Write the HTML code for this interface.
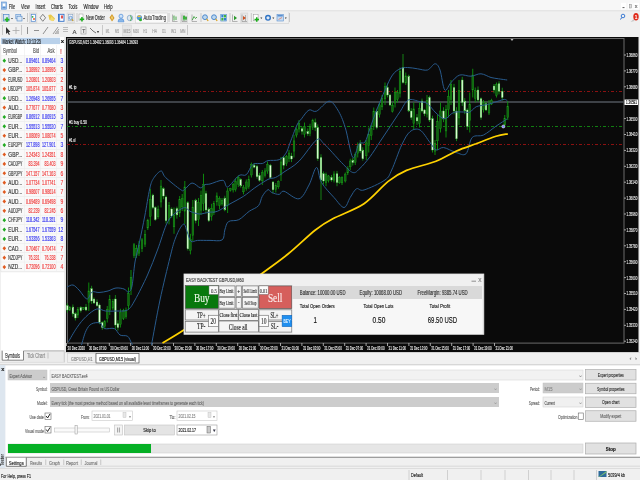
<!DOCTYPE html>
<html><head><meta charset="utf-8"><style>
html,body{margin:0;padding:0;width:640px;height:480px;overflow:hidden;background:#f0f0f0;}
svg{display:block;font-family:"Liberation Sans",sans-serif;will-change:transform;}
</style></head><body>
<svg width="640" height="480" viewBox="0 0 640 480" shape-rendering="auto">
<rect x="0.00" y="0.00" width="640.00" height="480.00" fill="#f0f0f0" />
<rect x="0.00" y="0.00" width="640.00" height="10.50" fill="#f7f7f7" />
<line x1="0.00" y1="10.80" x2="640.00" y2="10.80" stroke="#dcdcdc" stroke-width="0.9" />
<rect x="1.50" y="2.00" width="5.00" height="7.20" fill="#9cc0e8" stroke="#5a8fd0" stroke-width="0.6" />
<rect x="2.80" y="3.50" width="2.50" height="2.50" fill="#ffffff" />
<rect x="2.50" y="7.00" width="3.00" height="1.20" fill="#5a8fd0" />
<text x="9" y="8.6" font-size="7" fill="#1e1e1e" text-anchor="start" font-weight="normal" style="font-family:&quot;Liberation Sans&quot;" textLength="6" lengthAdjust="spacingAndGlyphs"  stroke="#1e1e1e" stroke-width="0.15">File</text>
<text x="21" y="8.6" font-size="7" fill="#1e1e1e" text-anchor="start" font-weight="normal" style="font-family:&quot;Liberation Sans&quot;" textLength="8.6" lengthAdjust="spacingAndGlyphs"  stroke="#1e1e1e" stroke-width="0.15">View</text>
<text x="35.6" y="8.6" font-size="7" fill="#1e1e1e" text-anchor="start" font-weight="normal" style="font-family:&quot;Liberation Sans&quot;" textLength="9.8" lengthAdjust="spacingAndGlyphs"  stroke="#1e1e1e" stroke-width="0.15">Insert</text>
<text x="51" y="8.6" font-size="7" fill="#1e1e1e" text-anchor="start" font-weight="normal" style="font-family:&quot;Liberation Sans&quot;" textLength="11.8" lengthAdjust="spacingAndGlyphs"  stroke="#1e1e1e" stroke-width="0.15">Charts</text>
<text x="68.5" y="8.6" font-size="7" fill="#1e1e1e" text-anchor="start" font-weight="normal" style="font-family:&quot;Liberation Sans&quot;" textLength="8.8" lengthAdjust="spacingAndGlyphs"  stroke="#1e1e1e" stroke-width="0.15">Tools</text>
<text x="83.5" y="8.6" font-size="7" fill="#1e1e1e" text-anchor="start" font-weight="normal" style="font-family:&quot;Liberation Sans&quot;" textLength="15" lengthAdjust="spacingAndGlyphs"  stroke="#1e1e1e" stroke-width="0.15">Window</text>
<text x="104" y="8.6" font-size="7" fill="#1e1e1e" text-anchor="start" font-weight="normal" style="font-family:&quot;Liberation Sans&quot;" textLength="8.6" lengthAdjust="spacingAndGlyphs"  stroke="#1e1e1e" stroke-width="0.15">Help</text>
<rect x="621.00" y="2.80" width="5.00" height="6.60" fill="#ffffff" />
<rect x="628.00" y="2.80" width="4.50" height="6.60" fill="#ffffff" />
<rect x="633.50" y="2.80" width="5.50" height="6.60" fill="#ffffff" />
<line x1="622.50" y1="7.60" x2="624.50" y2="7.60" stroke="#333" stroke-width="0.8" />
<rect x="629.30" y="4.20" width="2.00" height="3.80" fill="#ddd" stroke="#888" stroke-width="0.5" />
<text x="636.2" y="8.3" font-size="5.5" fill="#555" text-anchor="middle" font-weight="normal" style="font-family:&quot;Liberation Sans&quot;"  stroke="#555" stroke-width="0.15">x</text>
<rect x="0.00" y="12.00" width="290.00" height="11.00" fill="#f0f0f0" />
<line x1="0.00" y1="23.50" x2="289.00" y2="23.50" stroke="#dcdcdc" stroke-width="1" />
<line x1="288.70" y1="12.00" x2="288.70" y2="23.50" stroke="#dcdcdc" stroke-width="0.8" />
<line x1="2.00" y1="13.00" x2="2.00" y2="22.00" stroke="#c8c8c8" stroke-width="1" />
<rect x="3.50" y="14.50" width="5.50" height="6.50" fill="#dbe8f6" stroke="#4f86c6" stroke-width="0.7" />
<path d="M6.2,17.2 h1.6 v1.6 h1.6 v1.6 h-1.6 v1.6 h-1.6 v-1.6 h-1.6 v-1.6 h1.6 Z" fill="#22b422"/>
<path d="M11,18 L13,18 L12,19.3 Z" fill="#333"/>
<rect x="15.80" y="14.30" width="5.00" height="4.50" fill="#cfe0f3" stroke="#5a8fcf" stroke-width="0.6" />
<rect x="17.00" y="16.20" width="5.00" height="4.80" fill="#dbe8f6" stroke="#4f86c6" stroke-width="0.6" />
<path d="M23,18 L25,18 L24,19.3 Z" fill="#333"/>
<line x1="27.50" y1="13.00" x2="27.50" y2="22.00" stroke="#c8c8c8" stroke-width="1" />
<rect x="29.40" y="13.00" width="7.50" height="10.00" fill="#e6e6e6" stroke="#d4d4d4" stroke-width="0.6" />
<rect x="31.20" y="14.30" width="4.20" height="7.00" fill="#ffffff" stroke="#4a84d0" stroke-width="0.7" />
<circle cx="32.6" cy="16.8" r="0.9" fill="#2fa82f"/><circle cx="34" cy="19" r="1" fill="#e8602c"/>
<path d="M42.8,14.3 L45.6,17.8 L42.8,21.3 L40,17.8 Z" fill="none" stroke="#777" stroke-width="0.9"/>
<path d="M48.3,15 L51,14.5 L55,18.5 L53.5,21 L49.5,20 Z" fill="#e8c848"/><path d="M51.5,16.5 L54.5,19.5 L52.5,21.3 L50,19.5Z" fill="#f4dc70"/>
<rect x="58.50" y="14.30" width="5.50" height="7.00" fill="#ffffff" stroke="#2f6fc8" stroke-width="0.9" />
<line x1="59.60" y1="14.80" x2="59.60" y2="20.80" stroke="#2f6fc8" stroke-width="0.8" />
<rect x="61.00" y="15.50" width="2.00" height="3.00" fill="#e05050" />
<rect x="67.00" y="13.00" width="7.40" height="10.00" fill="#e6e6e6" stroke="#d4d4d4" stroke-width="0.6" />
<rect x="68.30" y="14.30" width="4.50" height="6.30" fill="#f0f4fa" stroke="#8aa4c4" stroke-width="0.6" />
<circle cx="70.6" cy="17.9" r="1.6" fill="#cfe3f5" stroke="#3a7bc8" stroke-width="0.6"/>
<line x1="71.80" y1="19.20" x2="73.20" y2="20.80" stroke="#c89a20" stroke-width="1.1" />
<line x1="77.00" y1="13.00" x2="77.00" y2="22.00" stroke="#c8c8c8" stroke-width="1" />
<rect x="79.00" y="14.00" width="4.00" height="6.50" fill="#fff" stroke="#999" stroke-width="0.5" />
<path d="M81.2,17 h1.5 v1.5 h1.5 v1.5 h-1.5 v1.5 h-1.5 v-1.5 h-1.5 v-1.5 h1.5 Z" fill="#18b018"/>
<text x="86" y="20" font-size="6.8" fill="#222" text-anchor="start" font-weight="normal" style="font-family:&quot;Liberation Sans&quot;" textLength="18.8" lengthAdjust="spacingAndGlyphs"  stroke="#222" stroke-width="0.15">New Order</text>
<path d="M109.5,17.5 L112,14 L114.5,18 L112,21.5 Z" fill="#d49a2a"/><path d="M111,17.5 L112,15.5 L113.2,18 L112,20 Z" fill="#f0d070"/>
<circle cx="121" cy="16.2" r="2" fill="#cfe3f7" stroke="#4a8ad8" stroke-width="0.7"/><path d="M118,21.8 Q118,18.6 121,18.6 Q124,18.6 124,21.8 Z" fill="#8ab8e8" stroke="#4a8ad8" stroke-width="0.6"/>
<circle cx="130" cy="18" r="2.8" fill="#dfe8f0" stroke="#7aa0c8" stroke-width="0.7"/><path d="M130.5,15.5 Q132.5,18 130.5,20.8" fill="none" stroke="#3aa03a" stroke-width="0.9"/>
<rect x="135.40" y="13.00" width="32.00" height="10.00" fill="#fafafa" stroke="#d0d0d0" stroke-width="0.6" />
<circle cx="139.4" cy="17.6" r="2.7" fill="#5a9ad8"/><path d="M137,17 L139,15 L141.5,17Z" fill="#f0c040"/>
<circle cx="140.5" cy="19.8" r="1.5" fill="#2fb02f"/>
<text x="143.5" y="20" font-size="6.8" fill="#333" text-anchor="start" font-weight="normal" style="font-family:&quot;Liberation Sans&quot;" textLength="22.5" lengthAdjust="spacingAndGlyphs"  stroke="#333" stroke-width="0.15">AutoTrading</text>
<line x1="169.00" y1="13.00" x2="169.00" y2="22.00" stroke="#c8c8c8" stroke-width="1" />
<line x1="172.50" y1="14.50" x2="172.50" y2="21.50" stroke="#888" stroke-width="0.6" />
<line x1="172.50" y1="21.50" x2="177.50" y2="21.50" stroke="#888" stroke-width="0.6" />
<line x1="174.00" y1="15.50" x2="174.00" y2="20.50" stroke="#2a9a2a" stroke-width="0.8" />
<line x1="176.00" y1="16.50" x2="176.00" y2="20.00" stroke="#2a9a2a" stroke-width="0.8" />
<line x1="173.50" y1="17.00" x2="174.00" y2="17.00" stroke="#2a9a2a" stroke-width="0.6" />
<rect x="180.60" y="13.00" width="7.00" height="10.00" fill="#e6e6e6" stroke="#d4d4d4" stroke-width="0.6" />
<line x1="182.00" y1="14.50" x2="182.00" y2="21.50" stroke="#888" stroke-width="0.6" />
<line x1="182.00" y1="21.50" x2="187.00" y2="21.50" stroke="#888" stroke-width="0.6" />
<line x1="184.00" y1="15.00" x2="184.00" y2="21.00" stroke="#157a15" stroke-width="0.6" />
<rect x="183.20" y="16.00" width="1.60" height="3.50" fill="#20b020" />
<line x1="186.00" y1="16.00" x2="186.00" y2="20.50" stroke="#157a15" stroke-width="0.6" />
<rect x="185.30" y="17.00" width="1.40" height="2.50" fill="#20a020" />
<line x1="192.00" y1="14.50" x2="192.00" y2="21.50" stroke="#888" stroke-width="0.6" />
<line x1="192.00" y1="21.50" x2="197.00" y2="21.50" stroke="#888" stroke-width="0.6" />
<path d="M192.3,20 L194,16.5 L195.5,18.5 L197,17" fill="none" stroke="#2a9a2a" stroke-width="0.8"/>
<line x1="201.00" y1="13.00" x2="201.00" y2="22.00" stroke="#c8c8c8" stroke-width="1" />
<circle cx="205" cy="17.2" r="2.4" fill="#bcd8f0" stroke="#3f7fc8" stroke-width="0.9"/>
<line x1="206.60" y1="18.90" x2="208.20" y2="21.00" stroke="#d8a020" stroke-width="1.2" />
<circle cx="214" cy="17.2" r="2.4" fill="#bcd8f0" stroke="#3f7fc8" stroke-width="0.9"/>
<line x1="215.60" y1="18.90" x2="217.20" y2="21.00" stroke="#d8a020" stroke-width="1.2" />
<rect x="220.80" y="14.50" width="5.50" height="6.50" fill="#ffffff" stroke="#3c80c8" stroke-width="0.6" />
<rect x="221.30" y="15.00" width="2.20" height="2.50" fill="#2f7fd0" />
<rect x="223.80" y="15.00" width="2.20" height="2.50" fill="#40b040" />
<rect x="221.30" y="18.00" width="2.20" height="2.50" fill="#40b040" />
<rect x="223.80" y="18.00" width="2.20" height="2.50" fill="#2f7fd0" />
<line x1="230.00" y1="13.00" x2="230.00" y2="22.00" stroke="#c8c8c8" stroke-width="1" />
<line x1="232.50" y1="14.50" x2="232.50" y2="21.50" stroke="#888" stroke-width="0.6" />
<line x1="232.50" y1="21.50" x2="237.50" y2="21.50" stroke="#888" stroke-width="0.6" />
<path d="M234,15.8 L237,18 L234,20.2Z" fill="#2a9a2a"/>
<rect x="240.80" y="13.00" width="7.00" height="10.00" fill="#e6e6e6" stroke="#d4d4d4" stroke-width="0.6" />
<line x1="242.00" y1="14.50" x2="242.00" y2="21.50" stroke="#888" stroke-width="0.6" />
<line x1="242.00" y1="21.50" x2="247.00" y2="21.50" stroke="#888" stroke-width="0.6" />
<line x1="245.50" y1="15.00" x2="245.50" y2="21.00" stroke="#888" stroke-width="0.6" />
<path d="M243,16 L246,18 L243,20Z" fill="#d05020"/>
<line x1="251.30" y1="13.00" x2="251.30" y2="22.00" stroke="#c8c8c8" stroke-width="1" />
<rect x="253.30" y="14.30" width="4.80" height="6.50" fill="#fff" stroke="#999" stroke-width="0.5" />
<path d="M256,17.3 h1.5 v1.5 h1.5 v1.5 h-1.5 v1.5 h-1.5 v-1.5 h-1.5 v-1.5 h1.5 Z" fill="#18b018"/>
<path d="M260.3,17.6 L262.3,17.6 L261.3,18.9 Z" fill="#333"/>
<circle cx="268" cy="17.8" r="3" fill="#2f73c4"/><circle cx="268" cy="17.8" r="1.6" fill="#dfe9f5"/>
<path d="M272.3,17.6 L274.3,17.6 L273.3,18.9 Z" fill="#333"/>
<rect x="277.00" y="14.50" width="6.30" height="6.50" fill="#c6dcf2" stroke="#5a8fcf" stroke-width="0.6" />
<rect x="277.50" y="15.00" width="5.30" height="1.50" fill="#5a8fcf" />
<line x1="278.50" y1="19.50" x2="282.00" y2="17.50" stroke="#e06040" stroke-width="0.6" />
<path d="M284.8,17.6 L286.8,17.6 L285.8,18.9 Z" fill="#333"/>
<line x1="289.50" y1="13.00" x2="289.50" y2="22.00" stroke="#c8c8c8" stroke-width="1" />
<circle cx="623" cy="16" r="1.8" fill="none" stroke="#2a6fd0" stroke-width="0.9"/>
<line x1="621.70" y1="17.50" x2="620.50" y2="19.50" stroke="#2a6fd0" stroke-width="1" />
<path d="M630.6,22 L633.5,19 L634.5,21 Z" fill="#c8c8c8"/>
<ellipse cx="636" cy="16.8" rx="2.7" ry="3.7" fill="#e02a1a"/>
<text x="636" y="18.8" font-size="4.8" fill="#fff" text-anchor="middle" font-weight="normal" style="font-family:&quot;Liberation Sans&quot;"  stroke="#fff" stroke-width="0.15">1</text>
<rect x="0.00" y="24.00" width="188.00" height="12.00" fill="#f0f0f0" />
<line x1="2.50" y1="25.00" x2="2.50" y2="35.00" stroke="#c8c8c8" stroke-width="1" />
<path d="M6,27 L6,34 L7.5,32.5 L9,35 L9.8,34.6 L8.7,32 L10.5,32 Z" fill="#333"/>
<line x1="16.00" y1="27.00" x2="16.00" y2="34.00" stroke="#aaa" stroke-width="0.8" />
<line x1="12.50" y1="30.50" x2="19.50" y2="30.50" stroke="#aaa" stroke-width="0.8" />
<line x1="21.50" y1="25.00" x2="21.50" y2="35.00" stroke="#c8c8c8" stroke-width="1" />
<line x1="27.50" y1="27.00" x2="27.50" y2="34.00" stroke="#777" stroke-width="0.8" />
<line x1="34.00" y1="30.50" x2="39.00" y2="30.50" stroke="#777" stroke-width="0.8" />
<line x1="43.00" y1="34.00" x2="48.00" y2="27.00" stroke="#777" stroke-width="0.8" />
<line x1="53.00" y1="34.00" x2="58.00" y2="27.00" stroke="#888" stroke-width="0.8" />
<line x1="55.00" y1="34.00" x2="59.00" y2="29.00" stroke="#888" stroke-width="0.8" />
<rect x="56.00" y="31.00" width="3.00" height="3.00" fill="#bbb" />
<line x1="63.00" y1="27.50" x2="68.00" y2="27.50" stroke="#999" stroke-width="0.6" />
<line x1="63.00" y1="29.50" x2="68.00" y2="29.50" stroke="#999" stroke-width="0.6" />
<line x1="63.00" y1="31.50" x2="68.00" y2="31.50" stroke="#999" stroke-width="0.6" />
<text x="72.5" y="33.5" font-size="6" fill="#444" text-anchor="start" font-weight="normal" style="font-family:&quot;Liberation Sans&quot;"  stroke="#444" stroke-width="0.15">A</text>
<rect x="81.00" y="27.00" width="5.00" height="7.00" fill="none" stroke="#999" stroke-width="0.6" />
<text x="82.3" y="33" font-size="5" fill="#555" text-anchor="start" font-weight="normal" style="font-family:&quot;Liberation Sans&quot;"  stroke="#555" stroke-width="0.15">T</text>
<path d="M90,28 L93,31 L96,33" fill="none" stroke="#666" stroke-width="0.9"/>
<text x="97" y="33" font-size="4" fill="#333" text-anchor="start" font-weight="normal" style="font-family:&quot;Liberation Sans&quot;"  stroke="#333" stroke-width="0.15">▾</text>
<line x1="102.50" y1="25.00" x2="102.50" y2="35.00" stroke="#c8c8c8" stroke-width="1" />
<rect x="122.30" y="25.00" width="9.00" height="11.00" fill="#e6e6e6" stroke="#d4d4d4" stroke-width="0.6" />
<text x="105.8" y="32.5" font-size="5" fill="#a0a0a0" text-anchor="start" font-weight="normal" style="font-family:&quot;Liberation Sans&quot;" textLength="3.6" lengthAdjust="spacingAndGlyphs"  stroke="#a0a0a0" stroke-width="0.15">M1</text>
<text x="115" y="32.5" font-size="5" fill="#a0a0a0" text-anchor="start" font-weight="normal" style="font-family:&quot;Liberation Sans&quot;" textLength="4" lengthAdjust="spacingAndGlyphs"  stroke="#a0a0a0" stroke-width="0.15">M5</text>
<text x="123.5" y="32.5" font-size="5" fill="#a0a0a0" text-anchor="start" font-weight="normal" style="font-family:&quot;Liberation Sans&quot;" textLength="7" lengthAdjust="spacingAndGlyphs"  stroke="#a0a0a0" stroke-width="0.15">M15</text>
<text x="133" y="32.5" font-size="5" fill="#a0a0a0" text-anchor="start" font-weight="normal" style="font-family:&quot;Liberation Sans&quot;" textLength="6" lengthAdjust="spacingAndGlyphs"  stroke="#a0a0a0" stroke-width="0.15">M30</text>
<text x="143.3" y="32.5" font-size="5" fill="#a0a0a0" text-anchor="start" font-weight="normal" style="font-family:&quot;Liberation Sans&quot;" textLength="3.8" lengthAdjust="spacingAndGlyphs"  stroke="#a0a0a0" stroke-width="0.15">H1</text>
<text x="152.2" y="32.5" font-size="5" fill="#a0a0a0" text-anchor="start" font-weight="normal" style="font-family:&quot;Liberation Sans&quot;" textLength="4.5" lengthAdjust="spacingAndGlyphs"  stroke="#a0a0a0" stroke-width="0.15">H4</text>
<text x="162.2" y="32.5" font-size="5" fill="#a0a0a0" text-anchor="start" font-weight="normal" style="font-family:&quot;Liberation Sans&quot;" textLength="3.5" lengthAdjust="spacingAndGlyphs"  stroke="#a0a0a0" stroke-width="0.15">D1</text>
<text x="171" y="32.5" font-size="5" fill="#a0a0a0" text-anchor="start" font-weight="normal" style="font-family:&quot;Liberation Sans&quot;" textLength="5" lengthAdjust="spacingAndGlyphs"  stroke="#a0a0a0" stroke-width="0.15">W1</text>
<text x="180.2" y="32.5" font-size="5" fill="#a0a0a0" text-anchor="start" font-weight="normal" style="font-family:&quot;Liberation Sans&quot;" textLength="5.2" lengthAdjust="spacingAndGlyphs"  stroke="#a0a0a0" stroke-width="0.15">MN</text>
<line x1="187.50" y1="25.00" x2="187.50" y2="35.00" stroke="#c8c8c8" stroke-width="1" />
<rect x="0.00" y="36.50" width="65.00" height="320.00" fill="#f0f0f0" />
<rect x="0.50" y="37.00" width="64.00" height="8.00" fill="#ffffff" />
<rect x="1.00" y="37.70" width="59.00" height="6.40" fill="#b9d1ea" />
<text x="2.5" y="43.5" font-size="6.3" fill="#1a1a1a" text-anchor="start" font-weight="normal" style="font-family:&quot;Liberation Sans&quot;" textLength="38.5" lengthAdjust="spacingAndGlyphs"  stroke="#1a1a1a" stroke-width="0.15">Market Watch: 10:13:25</text>
<text x="62.4" y="42.9" font-size="6" fill="#111" text-anchor="middle" font-weight="bold" style="font-family:&quot;Liberation Sans&quot;"  stroke="#111" stroke-width="0.15">x</text>
<rect x="1.00" y="45.00" width="63.50" height="305.50" fill="#ffffff" />
<rect x="1.00" y="45.00" width="63.50" height="11.00" fill="#ffffff" />
<text x="3" y="53.2" font-size="6.6" fill="#555" text-anchor="start" font-weight="normal" style="font-family:&quot;Liberation Sans&quot;" textLength="14" lengthAdjust="spacingAndGlyphs"  stroke="#555" stroke-width="0.15">Symbol</text>
<text x="33" y="53.2" font-size="6.6" fill="#555" text-anchor="start" font-weight="normal" style="font-family:&quot;Liberation Sans&quot;" textLength="6" lengthAdjust="spacingAndGlyphs"  stroke="#555" stroke-width="0.15">Bid</text>
<text x="47.5" y="53.2" font-size="6.6" fill="#555" text-anchor="start" font-weight="normal" style="font-family:&quot;Liberation Sans&quot;" textLength="7" lengthAdjust="spacingAndGlyphs"  stroke="#555" stroke-width="0.15">Ask</text>
<text x="61" y="53.5" font-size="6.8" fill="#d04040" text-anchor="middle" font-weight="normal" style="font-family:&quot;Liberation Sans&quot;"  stroke="#d04040" stroke-width="0.15">!</text>
<line x1="1.00" y1="56.00" x2="64.50" y2="56.00" stroke="#e6e6e6" stroke-width="0.8" />
<rect x="1.00" y="56.00" width="63.50" height="9.38" fill="#f9f9f9" />
<line x1="1.00" y1="65.38" x2="64.50" y2="65.38" stroke="#e2e2e2" stroke-width="0.7" />
<path d="M4.3,58.60 L6.1,60.70 L4.3,62.80 L2.5,60.70 Z" fill="#22aa22"/>
<text x="8.3" y="63.0" font-size="6.8" fill="#333" text-anchor="start" font-weight="normal" style="font-family:&quot;Liberation Sans&quot;" textLength="14" lengthAdjust="spacingAndGlyphs" stroke="#333" stroke-width="0.15">USD...</text>
<text x="26.0" y="63.0" font-size="6.8" fill="#3636f0" text-anchor="start" font-weight="normal" style="font-family:&quot;Liberation Sans&quot;" textLength="13.5" lengthAdjust="spacingAndGlyphs" stroke="#3636f0" stroke-width="0.18">0.89461</text>
<text x="42.0" y="63.0" font-size="6.8" fill="#3636f0" text-anchor="start" font-weight="normal" style="font-family:&quot;Liberation Sans&quot;" textLength="13.5" lengthAdjust="spacingAndGlyphs" stroke="#3636f0" stroke-width="0.18">0.89464</text>
<text x="60.5" y="63.0" font-size="6.8" fill="#3636f0" text-anchor="start" font-weight="normal" style="font-family:&quot;Liberation Sans&quot;" textLength="2.8" lengthAdjust="spacingAndGlyphs" stroke="#3636f0" stroke-width="0.15">3</text>
<rect x="1.00" y="65.38" width="63.50" height="9.38" fill="#f9f9f9" />
<line x1="1.00" y1="74.76" x2="64.50" y2="74.76" stroke="#e2e2e2" stroke-width="0.7" />
<path d="M4.3,67.98 L6.1,70.08 L4.3,72.18 L2.5,70.08 Z" fill="#e05a20"/>
<text x="8.3" y="72.38" font-size="6.8" fill="#333" text-anchor="start" font-weight="normal" style="font-family:&quot;Liberation Sans&quot;" textLength="14" lengthAdjust="spacingAndGlyphs" stroke="#333" stroke-width="0.15">GBP...</text>
<text x="26.0" y="72.38" font-size="6.8" fill="#f03838" text-anchor="start" font-weight="normal" style="font-family:&quot;Liberation Sans&quot;" textLength="13.5" lengthAdjust="spacingAndGlyphs" stroke="#f03838" stroke-width="0.18">1.38992</text>
<text x="42.0" y="72.38" font-size="6.8" fill="#f03838" text-anchor="start" font-weight="normal" style="font-family:&quot;Liberation Sans&quot;" textLength="13.5" lengthAdjust="spacingAndGlyphs" stroke="#f03838" stroke-width="0.18">1.38995</text>
<text x="60.5" y="72.38" font-size="6.8" fill="#f03838" text-anchor="start" font-weight="normal" style="font-family:&quot;Liberation Sans&quot;" textLength="2.8" lengthAdjust="spacingAndGlyphs" stroke="#f03838" stroke-width="0.15">3</text>
<rect x="1.00" y="74.76" width="63.50" height="9.38" fill="#f9f9f9" />
<line x1="1.00" y1="84.14" x2="64.50" y2="84.14" stroke="#e2e2e2" stroke-width="0.7" />
<path d="M4.3,77.36 L6.1,79.46 L4.3,81.56 L2.5,79.46 Z" fill="#e05a20"/>
<text x="8.3" y="81.76" font-size="6.8" fill="#333" text-anchor="start" font-weight="normal" style="font-family:&quot;Liberation Sans&quot;" textLength="14" lengthAdjust="spacingAndGlyphs" stroke="#333" stroke-width="0.15">EURUSD</text>
<text x="26.0" y="81.76" font-size="6.8" fill="#f03838" text-anchor="start" font-weight="normal" style="font-family:&quot;Liberation Sans&quot;" textLength="13.5" lengthAdjust="spacingAndGlyphs" stroke="#f03838" stroke-width="0.18">1.20801</text>
<text x="42.0" y="81.76" font-size="6.8" fill="#f03838" text-anchor="start" font-weight="normal" style="font-family:&quot;Liberation Sans&quot;" textLength="13.5" lengthAdjust="spacingAndGlyphs" stroke="#f03838" stroke-width="0.18">1.20803</text>
<text x="60.5" y="81.76" font-size="6.8" fill="#f03838" text-anchor="start" font-weight="normal" style="font-family:&quot;Liberation Sans&quot;" textLength="2.8" lengthAdjust="spacingAndGlyphs" stroke="#f03838" stroke-width="0.15">2</text>
<rect x="1.00" y="84.14" width="63.50" height="9.38" fill="#f9f9f9" />
<line x1="1.00" y1="93.52" x2="64.50" y2="93.52" stroke="#e2e2e2" stroke-width="0.7" />
<path d="M4.3,86.74 L6.1,88.84 L4.3,90.94 L2.5,88.84 Z" fill="#e05a20"/>
<text x="8.3" y="91.14" font-size="6.8" fill="#333" text-anchor="start" font-weight="normal" style="font-family:&quot;Liberation Sans&quot;" textLength="14" lengthAdjust="spacingAndGlyphs" stroke="#333" stroke-width="0.15">USDJPY</text>
<text x="26.0" y="91.14" font-size="6.8" fill="#f03838" text-anchor="start" font-weight="normal" style="font-family:&quot;Liberation Sans&quot;" textLength="13.5" lengthAdjust="spacingAndGlyphs" stroke="#f03838" stroke-width="0.18">105.874</text>
<text x="42.0" y="91.14" font-size="6.8" fill="#f03838" text-anchor="start" font-weight="normal" style="font-family:&quot;Liberation Sans&quot;" textLength="13.5" lengthAdjust="spacingAndGlyphs" stroke="#f03838" stroke-width="0.18">105.877</text>
<text x="60.5" y="91.14" font-size="6.8" fill="#f03838" text-anchor="start" font-weight="normal" style="font-family:&quot;Liberation Sans&quot;" textLength="2.8" lengthAdjust="spacingAndGlyphs" stroke="#f03838" stroke-width="0.15">3</text>
<rect x="1.00" y="93.52" width="63.50" height="9.38" fill="#f9f9f9" />
<line x1="1.00" y1="102.90" x2="64.50" y2="102.90" stroke="#e2e2e2" stroke-width="0.7" />
<path d="M4.3,96.12 L6.1,98.22 L4.3,100.32 L2.5,98.22 Z" fill="#22aa22"/>
<text x="8.3" y="100.52000000000001" font-size="6.8" fill="#333" text-anchor="start" font-weight="normal" style="font-family:&quot;Liberation Sans&quot;" textLength="14" lengthAdjust="spacingAndGlyphs" stroke="#333" stroke-width="0.15">USD...</text>
<text x="26.0" y="100.52000000000001" font-size="6.8" fill="#3636f0" text-anchor="start" font-weight="normal" style="font-family:&quot;Liberation Sans&quot;" textLength="13.5" lengthAdjust="spacingAndGlyphs" stroke="#3636f0" stroke-width="0.18">1.26948</text>
<text x="42.0" y="100.52000000000001" font-size="6.8" fill="#3636f0" text-anchor="start" font-weight="normal" style="font-family:&quot;Liberation Sans&quot;" textLength="13.5" lengthAdjust="spacingAndGlyphs" stroke="#3636f0" stroke-width="0.18">1.26955</text>
<text x="60.5" y="100.52000000000001" font-size="6.8" fill="#3636f0" text-anchor="start" font-weight="normal" style="font-family:&quot;Liberation Sans&quot;" textLength="2.8" lengthAdjust="spacingAndGlyphs" stroke="#3636f0" stroke-width="0.15">7</text>
<rect x="1.00" y="102.90" width="63.50" height="9.38" fill="#f9f9f9" />
<line x1="1.00" y1="112.28" x2="64.50" y2="112.28" stroke="#e2e2e2" stroke-width="0.7" />
<path d="M4.3,105.50 L6.1,107.60 L4.3,109.70 L2.5,107.60 Z" fill="#e05a20"/>
<text x="8.3" y="109.9" font-size="6.8" fill="#333" text-anchor="start" font-weight="normal" style="font-family:&quot;Liberation Sans&quot;" textLength="14" lengthAdjust="spacingAndGlyphs" stroke="#333" stroke-width="0.15">AUD...</text>
<text x="26.0" y="109.9" font-size="6.8" fill="#f03838" text-anchor="start" font-weight="normal" style="font-family:&quot;Liberation Sans&quot;" textLength="13.5" lengthAdjust="spacingAndGlyphs" stroke="#f03838" stroke-width="0.18">0.77677</text>
<text x="42.0" y="109.9" font-size="6.8" fill="#f03838" text-anchor="start" font-weight="normal" style="font-family:&quot;Liberation Sans&quot;" textLength="13.5" lengthAdjust="spacingAndGlyphs" stroke="#f03838" stroke-width="0.18">0.77680</text>
<text x="60.5" y="109.9" font-size="6.8" fill="#f03838" text-anchor="start" font-weight="normal" style="font-family:&quot;Liberation Sans&quot;" textLength="2.8" lengthAdjust="spacingAndGlyphs" stroke="#f03838" stroke-width="0.15">3</text>
<rect x="1.00" y="112.28" width="63.50" height="9.38" fill="#f9f9f9" />
<line x1="1.00" y1="121.66" x2="64.50" y2="121.66" stroke="#e2e2e2" stroke-width="0.7" />
<path d="M4.3,114.88 L6.1,116.98 L4.3,119.08 L2.5,116.98 Z" fill="#22aa22"/>
<text x="8.3" y="119.28" font-size="6.8" fill="#333" text-anchor="start" font-weight="normal" style="font-family:&quot;Liberation Sans&quot;" textLength="14" lengthAdjust="spacingAndGlyphs" stroke="#333" stroke-width="0.15">EURGBP</text>
<text x="26.0" y="119.28" font-size="6.8" fill="#3636f0" text-anchor="start" font-weight="normal" style="font-family:&quot;Liberation Sans&quot;" textLength="13.5" lengthAdjust="spacingAndGlyphs" stroke="#3636f0" stroke-width="0.18">0.86912</text>
<text x="42.0" y="119.28" font-size="6.8" fill="#3636f0" text-anchor="start" font-weight="normal" style="font-family:&quot;Liberation Sans&quot;" textLength="13.5" lengthAdjust="spacingAndGlyphs" stroke="#3636f0" stroke-width="0.18">0.86915</text>
<text x="60.5" y="119.28" font-size="6.8" fill="#3636f0" text-anchor="start" font-weight="normal" style="font-family:&quot;Liberation Sans&quot;" textLength="2.8" lengthAdjust="spacingAndGlyphs" stroke="#3636f0" stroke-width="0.15">3</text>
<rect x="1.00" y="121.66" width="63.50" height="9.38" fill="#f9f9f9" />
<line x1="1.00" y1="131.04" x2="64.50" y2="131.04" stroke="#e2e2e2" stroke-width="0.7" />
<path d="M4.3,124.26 L6.1,126.36 L4.3,128.46 L2.5,126.36 Z" fill="#22aa22"/>
<text x="8.3" y="128.66000000000003" font-size="6.8" fill="#333" text-anchor="start" font-weight="normal" style="font-family:&quot;Liberation Sans&quot;" textLength="14" lengthAdjust="spacingAndGlyphs" stroke="#333" stroke-width="0.15">EUR...</text>
<text x="26.0" y="128.66000000000003" font-size="6.8" fill="#3636f0" text-anchor="start" font-weight="normal" style="font-family:&quot;Liberation Sans&quot;" textLength="13.5" lengthAdjust="spacingAndGlyphs" stroke="#3636f0" stroke-width="0.18">1.55513</text>
<text x="42.0" y="128.66000000000003" font-size="6.8" fill="#3636f0" text-anchor="start" font-weight="normal" style="font-family:&quot;Liberation Sans&quot;" textLength="13.5" lengthAdjust="spacingAndGlyphs" stroke="#3636f0" stroke-width="0.18">1.55520</text>
<text x="60.5" y="128.66000000000003" font-size="6.8" fill="#3636f0" text-anchor="start" font-weight="normal" style="font-family:&quot;Liberation Sans&quot;" textLength="2.8" lengthAdjust="spacingAndGlyphs" stroke="#3636f0" stroke-width="0.15">7</text>
<rect x="1.00" y="131.04" width="63.50" height="9.38" fill="#f9f9f9" />
<line x1="1.00" y1="140.42" x2="64.50" y2="140.42" stroke="#e2e2e2" stroke-width="0.7" />
<path d="M4.3,133.64 L6.1,135.74 L4.3,137.84 L2.5,135.74 Z" fill="#e05a20"/>
<text x="8.3" y="138.04000000000002" font-size="6.8" fill="#333" text-anchor="start" font-weight="normal" style="font-family:&quot;Liberation Sans&quot;" textLength="14" lengthAdjust="spacingAndGlyphs" stroke="#333" stroke-width="0.15">EUR...</text>
<text x="26.0" y="138.04000000000002" font-size="6.8" fill="#f03838" text-anchor="start" font-weight="normal" style="font-family:&quot;Liberation Sans&quot;" textLength="13.5" lengthAdjust="spacingAndGlyphs" stroke="#f03838" stroke-width="0.18">1.08069</text>
<text x="42.0" y="138.04000000000002" font-size="6.8" fill="#f03838" text-anchor="start" font-weight="normal" style="font-family:&quot;Liberation Sans&quot;" textLength="13.5" lengthAdjust="spacingAndGlyphs" stroke="#f03838" stroke-width="0.18">1.08074</text>
<text x="60.5" y="138.04000000000002" font-size="6.8" fill="#f03838" text-anchor="start" font-weight="normal" style="font-family:&quot;Liberation Sans&quot;" textLength="2.8" lengthAdjust="spacingAndGlyphs" stroke="#f03838" stroke-width="0.15">5</text>
<rect x="1.00" y="140.42" width="63.50" height="9.38" fill="#f9f9f9" />
<line x1="1.00" y1="149.80" x2="64.50" y2="149.80" stroke="#e2e2e2" stroke-width="0.7" />
<path d="M4.3,143.02 L6.1,145.12 L4.3,147.22 L2.5,145.12 Z" fill="#22aa22"/>
<text x="8.3" y="147.42000000000002" font-size="6.8" fill="#333" text-anchor="start" font-weight="normal" style="font-family:&quot;Liberation Sans&quot;" textLength="14" lengthAdjust="spacingAndGlyphs" stroke="#333" stroke-width="0.15">EURJPY</text>
<text x="26.0" y="147.42000000000002" font-size="6.8" fill="#3636f0" text-anchor="start" font-weight="normal" style="font-family:&quot;Liberation Sans&quot;" textLength="13.5" lengthAdjust="spacingAndGlyphs" stroke="#3636f0" stroke-width="0.18">127.898</text>
<text x="42.0" y="147.42000000000002" font-size="6.8" fill="#3636f0" text-anchor="start" font-weight="normal" style="font-family:&quot;Liberation Sans&quot;" textLength="13.5" lengthAdjust="spacingAndGlyphs" stroke="#3636f0" stroke-width="0.18">127.901</text>
<text x="60.5" y="147.42000000000002" font-size="6.8" fill="#3636f0" text-anchor="start" font-weight="normal" style="font-family:&quot;Liberation Sans&quot;" textLength="2.8" lengthAdjust="spacingAndGlyphs" stroke="#3636f0" stroke-width="0.15">3</text>
<rect x="1.00" y="149.80" width="63.50" height="9.38" fill="#f9f9f9" />
<line x1="1.00" y1="159.18" x2="64.50" y2="159.18" stroke="#e2e2e2" stroke-width="0.7" />
<path d="M4.3,152.40 L6.1,154.50 L4.3,156.60 L2.5,154.50 Z" fill="#e05a20"/>
<text x="8.3" y="156.8" font-size="6.8" fill="#333" text-anchor="start" font-weight="normal" style="font-family:&quot;Liberation Sans&quot;" textLength="14" lengthAdjust="spacingAndGlyphs" stroke="#333" stroke-width="0.15">GBP...</text>
<text x="26.0" y="156.8" font-size="6.8" fill="#f03838" text-anchor="start" font-weight="normal" style="font-family:&quot;Liberation Sans&quot;" textLength="13.5" lengthAdjust="spacingAndGlyphs" stroke="#f03838" stroke-width="0.18">1.24343</text>
<text x="42.0" y="156.8" font-size="6.8" fill="#f03838" text-anchor="start" font-weight="normal" style="font-family:&quot;Liberation Sans&quot;" textLength="13.5" lengthAdjust="spacingAndGlyphs" stroke="#f03838" stroke-width="0.18">1.24351</text>
<text x="60.5" y="156.8" font-size="6.8" fill="#f03838" text-anchor="start" font-weight="normal" style="font-family:&quot;Liberation Sans&quot;" textLength="2.8" lengthAdjust="spacingAndGlyphs" stroke="#f03838" stroke-width="0.15">8</text>
<rect x="1.00" y="159.18" width="63.50" height="9.38" fill="#f9f9f9" />
<line x1="1.00" y1="168.56" x2="64.50" y2="168.56" stroke="#e2e2e2" stroke-width="0.7" />
<path d="M4.3,161.78 L6.1,163.88 L4.3,165.98 L2.5,163.88 Z" fill="#e05a20"/>
<text x="8.3" y="166.18" font-size="6.8" fill="#333" text-anchor="start" font-weight="normal" style="font-family:&quot;Liberation Sans&quot;" textLength="14" lengthAdjust="spacingAndGlyphs" stroke="#333" stroke-width="0.15">CADJPY</text>
<text x="28.5" y="166.18" font-size="6.8" fill="#f03838" text-anchor="start" font-weight="normal" style="font-family:&quot;Liberation Sans&quot;" textLength="11" lengthAdjust="spacingAndGlyphs" stroke="#f03838" stroke-width="0.18">83.394</text>
<text x="44.5" y="166.18" font-size="6.8" fill="#f03838" text-anchor="start" font-weight="normal" style="font-family:&quot;Liberation Sans&quot;" textLength="11" lengthAdjust="spacingAndGlyphs" stroke="#f03838" stroke-width="0.18">83.403</text>
<text x="60.5" y="166.18" font-size="6.8" fill="#f03838" text-anchor="start" font-weight="normal" style="font-family:&quot;Liberation Sans&quot;" textLength="2.8" lengthAdjust="spacingAndGlyphs" stroke="#f03838" stroke-width="0.15">9</text>
<rect x="1.00" y="168.56" width="63.50" height="9.38" fill="#f9f9f9" />
<line x1="1.00" y1="177.94" x2="64.50" y2="177.94" stroke="#e2e2e2" stroke-width="0.7" />
<path d="M4.3,171.16 L6.1,173.26 L4.3,175.36 L2.5,173.26 Z" fill="#e05a20"/>
<text x="8.3" y="175.56" font-size="6.8" fill="#333" text-anchor="start" font-weight="normal" style="font-family:&quot;Liberation Sans&quot;" textLength="14" lengthAdjust="spacingAndGlyphs" stroke="#333" stroke-width="0.15">GBPJPY</text>
<text x="26.0" y="175.56" font-size="6.8" fill="#f03838" text-anchor="start" font-weight="normal" style="font-family:&quot;Liberation Sans&quot;" textLength="13.5" lengthAdjust="spacingAndGlyphs" stroke="#f03838" stroke-width="0.18">147.157</text>
<text x="42.0" y="175.56" font-size="6.8" fill="#f03838" text-anchor="start" font-weight="normal" style="font-family:&quot;Liberation Sans&quot;" textLength="13.5" lengthAdjust="spacingAndGlyphs" stroke="#f03838" stroke-width="0.18">147.163</text>
<text x="60.5" y="175.56" font-size="6.8" fill="#f03838" text-anchor="start" font-weight="normal" style="font-family:&quot;Liberation Sans&quot;" textLength="2.8" lengthAdjust="spacingAndGlyphs" stroke="#f03838" stroke-width="0.15">6</text>
<rect x="1.00" y="177.94" width="63.50" height="9.38" fill="#f9f9f9" />
<line x1="1.00" y1="187.32" x2="64.50" y2="187.32" stroke="#e2e2e2" stroke-width="0.7" />
<path d="M4.3,180.54 L6.1,182.64 L4.3,184.74 L2.5,182.64 Z" fill="#e05a20"/>
<text x="8.3" y="184.94" font-size="6.8" fill="#333" text-anchor="start" font-weight="normal" style="font-family:&quot;Liberation Sans&quot;" textLength="14" lengthAdjust="spacingAndGlyphs" stroke="#333" stroke-width="0.15">AUD...</text>
<text x="26.0" y="184.94" font-size="6.8" fill="#f03838" text-anchor="start" font-weight="normal" style="font-family:&quot;Liberation Sans&quot;" textLength="13.5" lengthAdjust="spacingAndGlyphs" stroke="#f03838" stroke-width="0.18">1.07734</text>
<text x="42.0" y="184.94" font-size="6.8" fill="#f03838" text-anchor="start" font-weight="normal" style="font-family:&quot;Liberation Sans&quot;" textLength="13.5" lengthAdjust="spacingAndGlyphs" stroke="#f03838" stroke-width="0.18">1.07741</text>
<text x="60.5" y="184.94" font-size="6.8" fill="#f03838" text-anchor="start" font-weight="normal" style="font-family:&quot;Liberation Sans&quot;" textLength="2.8" lengthAdjust="spacingAndGlyphs" stroke="#f03838" stroke-width="0.15">7</text>
<rect x="1.00" y="187.32" width="63.50" height="9.38" fill="#f9f9f9" />
<line x1="1.00" y1="196.70" x2="64.50" y2="196.70" stroke="#e2e2e2" stroke-width="0.7" />
<path d="M4.3,189.92 L6.1,192.02 L4.3,194.12 L2.5,192.02 Z" fill="#e05a20"/>
<text x="8.3" y="194.32000000000002" font-size="6.8" fill="#333" text-anchor="start" font-weight="normal" style="font-family:&quot;Liberation Sans&quot;" textLength="14" lengthAdjust="spacingAndGlyphs" stroke="#333" stroke-width="0.15">AUD...</text>
<text x="26.0" y="194.32000000000002" font-size="6.8" fill="#f03838" text-anchor="start" font-weight="normal" style="font-family:&quot;Liberation Sans&quot;" textLength="13.5" lengthAdjust="spacingAndGlyphs" stroke="#f03838" stroke-width="0.18">0.98607</text>
<text x="42.0" y="194.32000000000002" font-size="6.8" fill="#f03838" text-anchor="start" font-weight="normal" style="font-family:&quot;Liberation Sans&quot;" textLength="13.5" lengthAdjust="spacingAndGlyphs" stroke="#f03838" stroke-width="0.18">0.98614</text>
<text x="60.5" y="194.32000000000002" font-size="6.8" fill="#f03838" text-anchor="start" font-weight="normal" style="font-family:&quot;Liberation Sans&quot;" textLength="2.8" lengthAdjust="spacingAndGlyphs" stroke="#f03838" stroke-width="0.15">7</text>
<rect x="1.00" y="196.70" width="63.50" height="9.38" fill="#f9f9f9" />
<line x1="1.00" y1="206.08" x2="64.50" y2="206.08" stroke="#e2e2e2" stroke-width="0.7" />
<path d="M4.3,199.30 L6.1,201.40 L4.3,203.50 L2.5,201.40 Z" fill="#e05a20"/>
<text x="8.3" y="203.70000000000002" font-size="6.8" fill="#333" text-anchor="start" font-weight="normal" style="font-family:&quot;Liberation Sans&quot;" textLength="14" lengthAdjust="spacingAndGlyphs" stroke="#333" stroke-width="0.15">AUD...</text>
<text x="26.0" y="203.70000000000002" font-size="6.8" fill="#f03838" text-anchor="start" font-weight="normal" style="font-family:&quot;Liberation Sans&quot;" textLength="13.5" lengthAdjust="spacingAndGlyphs" stroke="#f03838" stroke-width="0.18">0.69489</text>
<text x="42.0" y="203.70000000000002" font-size="6.8" fill="#f03838" text-anchor="start" font-weight="normal" style="font-family:&quot;Liberation Sans&quot;" textLength="13.5" lengthAdjust="spacingAndGlyphs" stroke="#f03838" stroke-width="0.18">0.69498</text>
<text x="60.5" y="203.70000000000002" font-size="6.8" fill="#f03838" text-anchor="start" font-weight="normal" style="font-family:&quot;Liberation Sans&quot;" textLength="2.8" lengthAdjust="spacingAndGlyphs" stroke="#f03838" stroke-width="0.15">9</text>
<rect x="1.00" y="206.08" width="63.50" height="9.38" fill="#f9f9f9" />
<line x1="1.00" y1="215.46" x2="64.50" y2="215.46" stroke="#e2e2e2" stroke-width="0.7" />
<path d="M4.3,208.68 L6.1,210.78 L4.3,212.88 L2.5,210.78 Z" fill="#e05a20"/>
<text x="8.3" y="213.08" font-size="6.8" fill="#333" text-anchor="start" font-weight="normal" style="font-family:&quot;Liberation Sans&quot;" textLength="14" lengthAdjust="spacingAndGlyphs" stroke="#333" stroke-width="0.15">AUDJPY</text>
<text x="28.5" y="213.08" font-size="6.8" fill="#f03838" text-anchor="start" font-weight="normal" style="font-family:&quot;Liberation Sans&quot;" textLength="11" lengthAdjust="spacingAndGlyphs" stroke="#f03838" stroke-width="0.18">82.239</text>
<text x="44.5" y="213.08" font-size="6.8" fill="#f03838" text-anchor="start" font-weight="normal" style="font-family:&quot;Liberation Sans&quot;" textLength="11" lengthAdjust="spacingAndGlyphs" stroke="#f03838" stroke-width="0.18">82.245</text>
<text x="60.5" y="213.08" font-size="6.8" fill="#f03838" text-anchor="start" font-weight="normal" style="font-family:&quot;Liberation Sans&quot;" textLength="2.8" lengthAdjust="spacingAndGlyphs" stroke="#f03838" stroke-width="0.15">6</text>
<rect x="1.00" y="215.46" width="63.50" height="9.38" fill="#f9f9f9" />
<line x1="1.00" y1="224.84" x2="64.50" y2="224.84" stroke="#e2e2e2" stroke-width="0.7" />
<path d="M4.3,218.06 L6.1,220.16 L4.3,222.26 L2.5,220.16 Z" fill="#22aa22"/>
<text x="8.3" y="222.46" font-size="6.8" fill="#333" text-anchor="start" font-weight="normal" style="font-family:&quot;Liberation Sans&quot;" textLength="14" lengthAdjust="spacingAndGlyphs" stroke="#333" stroke-width="0.15">CHFJPY</text>
<text x="26.0" y="222.46" font-size="6.8" fill="#3636f0" text-anchor="start" font-weight="normal" style="font-family:&quot;Liberation Sans&quot;" textLength="13.5" lengthAdjust="spacingAndGlyphs" stroke="#3636f0" stroke-width="0.18">118.342</text>
<text x="42.0" y="222.46" font-size="6.8" fill="#3636f0" text-anchor="start" font-weight="normal" style="font-family:&quot;Liberation Sans&quot;" textLength="13.5" lengthAdjust="spacingAndGlyphs" stroke="#3636f0" stroke-width="0.18">118.351</text>
<text x="60.5" y="222.46" font-size="6.8" fill="#3636f0" text-anchor="start" font-weight="normal" style="font-family:&quot;Liberation Sans&quot;" textLength="2.8" lengthAdjust="spacingAndGlyphs" stroke="#3636f0" stroke-width="0.15">9</text>
<rect x="1.00" y="224.84" width="63.50" height="9.38" fill="#f9f9f9" />
<line x1="1.00" y1="234.22" x2="64.50" y2="234.22" stroke="#e2e2e2" stroke-width="0.7" />
<path d="M4.3,227.44 L6.1,229.54 L4.3,231.64 L2.5,229.54 Z" fill="#22aa22"/>
<text x="8.3" y="231.84" font-size="6.8" fill="#333" text-anchor="start" font-weight="normal" style="font-family:&quot;Liberation Sans&quot;" textLength="14" lengthAdjust="spacingAndGlyphs" stroke="#333" stroke-width="0.15">EUR...</text>
<text x="26.0" y="231.84" font-size="6.8" fill="#3636f0" text-anchor="start" font-weight="normal" style="font-family:&quot;Liberation Sans&quot;" textLength="13.5" lengthAdjust="spacingAndGlyphs" stroke="#3636f0" stroke-width="0.18">1.67547</text>
<text x="42.0" y="231.84" font-size="6.8" fill="#3636f0" text-anchor="start" font-weight="normal" style="font-family:&quot;Liberation Sans&quot;" textLength="13.5" lengthAdjust="spacingAndGlyphs" stroke="#3636f0" stroke-width="0.18">1.67559</text>
<text x="58.3" y="231.84" font-size="6.8" fill="#3636f0" text-anchor="start" font-weight="normal" style="font-family:&quot;Liberation Sans&quot;" textLength="5" lengthAdjust="spacingAndGlyphs" stroke="#3636f0" stroke-width="0.15">12</text>
<rect x="1.00" y="234.22" width="63.50" height="9.38" fill="#f9f9f9" />
<line x1="1.00" y1="243.60" x2="64.50" y2="243.60" stroke="#e2e2e2" stroke-width="0.7" />
<path d="M4.3,236.82 L6.1,238.92 L4.3,241.02 L2.5,238.92 Z" fill="#22aa22"/>
<text x="8.3" y="241.22000000000003" font-size="6.8" fill="#333" text-anchor="start" font-weight="normal" style="font-family:&quot;Liberation Sans&quot;" textLength="14" lengthAdjust="spacingAndGlyphs" stroke="#333" stroke-width="0.15">EUR...</text>
<text x="26.0" y="241.22000000000003" font-size="6.8" fill="#3636f0" text-anchor="start" font-weight="normal" style="font-family:&quot;Liberation Sans&quot;" textLength="13.5" lengthAdjust="spacingAndGlyphs" stroke="#3636f0" stroke-width="0.18">1.53356</text>
<text x="42.0" y="241.22000000000003" font-size="6.8" fill="#3636f0" text-anchor="start" font-weight="normal" style="font-family:&quot;Liberation Sans&quot;" textLength="13.5" lengthAdjust="spacingAndGlyphs" stroke="#3636f0" stroke-width="0.18">1.53363</text>
<text x="60.5" y="241.22000000000003" font-size="6.8" fill="#3636f0" text-anchor="start" font-weight="normal" style="font-family:&quot;Liberation Sans&quot;" textLength="2.8" lengthAdjust="spacingAndGlyphs" stroke="#3636f0" stroke-width="0.15">8</text>
<rect x="1.00" y="243.60" width="63.50" height="9.38" fill="#f9f9f9" />
<line x1="1.00" y1="252.98" x2="64.50" y2="252.98" stroke="#e2e2e2" stroke-width="0.7" />
<path d="M4.3,246.20 L6.1,248.30 L4.3,250.40 L2.5,248.30 Z" fill="#e05a20"/>
<text x="8.3" y="250.60000000000002" font-size="6.8" fill="#333" text-anchor="start" font-weight="normal" style="font-family:&quot;Liberation Sans&quot;" textLength="14" lengthAdjust="spacingAndGlyphs" stroke="#333" stroke-width="0.15">CAD...</text>
<text x="26.0" y="250.60000000000002" font-size="6.8" fill="#f03838" text-anchor="start" font-weight="normal" style="font-family:&quot;Liberation Sans&quot;" textLength="13.5" lengthAdjust="spacingAndGlyphs" stroke="#f03838" stroke-width="0.18">0.70467</text>
<text x="42.0" y="250.60000000000002" font-size="6.8" fill="#f03838" text-anchor="start" font-weight="normal" style="font-family:&quot;Liberation Sans&quot;" textLength="13.5" lengthAdjust="spacingAndGlyphs" stroke="#f03838" stroke-width="0.18">0.70474</text>
<text x="60.5" y="250.60000000000002" font-size="6.8" fill="#f03838" text-anchor="start" font-weight="normal" style="font-family:&quot;Liberation Sans&quot;" textLength="2.8" lengthAdjust="spacingAndGlyphs" stroke="#f03838" stroke-width="0.15">7</text>
<rect x="1.00" y="252.98" width="63.50" height="9.38" fill="#f9f9f9" />
<line x1="1.00" y1="262.36" x2="64.50" y2="262.36" stroke="#e2e2e2" stroke-width="0.7" />
<path d="M4.3,255.58 L6.1,257.68 L4.3,259.78 L2.5,257.68 Z" fill="#e05a20"/>
<text x="8.3" y="259.98" font-size="6.8" fill="#333" text-anchor="start" font-weight="normal" style="font-family:&quot;Liberation Sans&quot;" textLength="14" lengthAdjust="spacingAndGlyphs" stroke="#333" stroke-width="0.15">NZDJPY</text>
<text x="28.5" y="259.98" font-size="6.8" fill="#f03838" text-anchor="start" font-weight="normal" style="font-family:&quot;Liberation Sans&quot;" textLength="11" lengthAdjust="spacingAndGlyphs" stroke="#f03838" stroke-width="0.18">76.331</text>
<text x="44.5" y="259.98" font-size="6.8" fill="#f03838" text-anchor="start" font-weight="normal" style="font-family:&quot;Liberation Sans&quot;" textLength="11" lengthAdjust="spacingAndGlyphs" stroke="#f03838" stroke-width="0.18">76.338</text>
<text x="60.5" y="259.98" font-size="6.8" fill="#f03838" text-anchor="start" font-weight="normal" style="font-family:&quot;Liberation Sans&quot;" textLength="2.8" lengthAdjust="spacingAndGlyphs" stroke="#f03838" stroke-width="0.15">7</text>
<rect x="1.00" y="262.36" width="63.50" height="9.38" fill="#f9f9f9" />
<line x1="1.00" y1="271.74" x2="64.50" y2="271.74" stroke="#e2e2e2" stroke-width="0.7" />
<path d="M4.3,264.96 L6.1,267.06 L4.3,269.16 L2.5,267.06 Z" fill="#e05a20"/>
<text x="8.3" y="269.36" font-size="6.8" fill="#333" text-anchor="start" font-weight="normal" style="font-family:&quot;Liberation Sans&quot;" textLength="14" lengthAdjust="spacingAndGlyphs" stroke="#333" stroke-width="0.15">NZD...</text>
<text x="26.0" y="269.36" font-size="6.8" fill="#f03838" text-anchor="start" font-weight="normal" style="font-family:&quot;Liberation Sans&quot;" textLength="13.5" lengthAdjust="spacingAndGlyphs" stroke="#f03838" stroke-width="0.18">0.72096</text>
<text x="42.0" y="269.36" font-size="6.8" fill="#f03838" text-anchor="start" font-weight="normal" style="font-family:&quot;Liberation Sans&quot;" textLength="13.5" lengthAdjust="spacingAndGlyphs" stroke="#f03838" stroke-width="0.18">0.72100</text>
<text x="60.5" y="269.36" font-size="6.8" fill="#f03838" text-anchor="start" font-weight="normal" style="font-family:&quot;Liberation Sans&quot;" textLength="2.8" lengthAdjust="spacingAndGlyphs" stroke="#f03838" stroke-width="0.15">4</text>
<line x1="24.50" y1="45.00" x2="24.50" y2="271.74" stroke="#ececec" stroke-width="0.6" />
<line x1="40.50" y1="45.00" x2="40.50" y2="271.74" stroke="#ececec" stroke-width="0.6" />
<line x1="56.50" y1="45.00" x2="56.50" y2="271.74" stroke="#ececec" stroke-width="0.6" />
<line x1="0.80" y1="45.00" x2="0.80" y2="271.74" stroke="#e0e0e0" stroke-width="0.6" />
<rect x="0.00" y="350.50" width="65.00" height="14.00" fill="#f0f0f0" />
<rect x="24.00" y="351.00" width="40.00" height="11.00" fill="#ebebeb" />
<line x1="23.50" y1="350.90" x2="64.50" y2="350.90" stroke="#a8a8a8" stroke-width="0.9" />
<line x1="64.30" y1="351.00" x2="64.30" y2="362.00" stroke="#bbbbbb" stroke-width="0.7" />
<line x1="0.00" y1="362.40" x2="65.00" y2="362.40" stroke="#d8d8d8" stroke-width="0.7" />
<rect x="2.00" y="350.50" width="21.50" height="9.70" fill="#ffffff" />
<path d="M2.2,350.7 L2.2,360.2 L23.5,360.2 L23.5,350.9" fill="none" stroke="#666" stroke-width="0.8"/>
<text x="5" y="357.8" font-size="6.3" fill="#333" text-anchor="start" font-weight="normal" style="font-family:&quot;Liberation Sans&quot;" textLength="15" lengthAdjust="spacingAndGlyphs"  stroke="#333" stroke-width="0.15">Symbols</text>
<text x="27" y="357.8" font-size="6.3" fill="#8a8a8a" text-anchor="start" font-weight="normal" style="font-family:&quot;Liberation Sans&quot;" textLength="18" lengthAdjust="spacingAndGlyphs"  stroke="#8a8a8a" stroke-width="0.15">Tick Chart</text>
<line x1="48.00" y1="352.50" x2="48.00" y2="358.50" stroke="#aaa" stroke-width="0.6" />
<line x1="65.00" y1="37.00" x2="65.00" y2="352.00" stroke="#d8d8d8" stroke-width="0.8" />
<rect x="66.00" y="37.00" width="572.50" height="315.50" fill="#0a0a0a" />
<rect x="67.4" y="38.5" width="556.6" height="304.6" fill="none" stroke="#6a6a6a" stroke-width="1"/>
<text x="69" y="43.8" font-size="5.3" fill="#e8e8e8" text-anchor="start" font-weight="normal" style="font-family:&quot;Liberation Sans&quot;" textLength="69" lengthAdjust="spacingAndGlyphs"  stroke="#e8e8e8" stroke-width="0.15">GBPUSD,M15  1.36492 1.36093 1.36484 1.36093</text>
<path d="M510.5,39 L513.5,39 L512,41 Z" fill="#c0c0c0"/>
<line x1="624.00" y1="55.00" x2="626.00" y2="55.00" stroke="#c8c8c8" stroke-width="0.8" />
<text x="626.4" y="56.9" font-size="5.2" fill="#e0e0e0" text-anchor="start" font-weight="normal" style="font-family:&quot;Liberation Sans&quot;" textLength="11" lengthAdjust="spacingAndGlyphs"  stroke="#e0e0e0" stroke-width="0.15">1.36860</text>
<line x1="624.00" y1="70.90" x2="626.00" y2="70.90" stroke="#c8c8c8" stroke-width="0.8" />
<text x="626.4" y="72.80000000000001" font-size="5.2" fill="#e0e0e0" text-anchor="start" font-weight="normal" style="font-family:&quot;Liberation Sans&quot;" textLength="11" lengthAdjust="spacingAndGlyphs"  stroke="#e0e0e0" stroke-width="0.15">1.36770</text>
<line x1="624.00" y1="86.80" x2="626.00" y2="86.80" stroke="#c8c8c8" stroke-width="0.8" />
<text x="626.4" y="88.7" font-size="5.2" fill="#e0e0e0" text-anchor="start" font-weight="normal" style="font-family:&quot;Liberation Sans&quot;" textLength="11" lengthAdjust="spacingAndGlyphs"  stroke="#e0e0e0" stroke-width="0.15">1.36680</text>
<line x1="624.00" y1="118.60" x2="626.00" y2="118.60" stroke="#c8c8c8" stroke-width="0.8" />
<text x="626.4" y="120.5" font-size="5.2" fill="#e0e0e0" text-anchor="start" font-weight="normal" style="font-family:&quot;Liberation Sans&quot;" textLength="11" lengthAdjust="spacingAndGlyphs"  stroke="#e0e0e0" stroke-width="0.15">1.36500</text>
<line x1="624.00" y1="134.50" x2="626.00" y2="134.50" stroke="#c8c8c8" stroke-width="0.8" />
<text x="626.4" y="136.4" font-size="5.2" fill="#e0e0e0" text-anchor="start" font-weight="normal" style="font-family:&quot;Liberation Sans&quot;" textLength="11" lengthAdjust="spacingAndGlyphs"  stroke="#e0e0e0" stroke-width="0.15">1.36410</text>
<line x1="624.00" y1="150.40" x2="626.00" y2="150.40" stroke="#c8c8c8" stroke-width="0.8" />
<text x="626.4" y="152.3" font-size="5.2" fill="#e0e0e0" text-anchor="start" font-weight="normal" style="font-family:&quot;Liberation Sans&quot;" textLength="11" lengthAdjust="spacingAndGlyphs"  stroke="#e0e0e0" stroke-width="0.15">1.36320</text>
<line x1="624.00" y1="166.30" x2="626.00" y2="166.30" stroke="#c8c8c8" stroke-width="0.8" />
<text x="626.4" y="168.20000000000002" font-size="5.2" fill="#e0e0e0" text-anchor="start" font-weight="normal" style="font-family:&quot;Liberation Sans&quot;" textLength="11" lengthAdjust="spacingAndGlyphs"  stroke="#e0e0e0" stroke-width="0.15">1.36230</text>
<line x1="624.00" y1="182.20" x2="626.00" y2="182.20" stroke="#c8c8c8" stroke-width="0.8" />
<text x="626.4" y="184.1" font-size="5.2" fill="#e0e0e0" text-anchor="start" font-weight="normal" style="font-family:&quot;Liberation Sans&quot;" textLength="11" lengthAdjust="spacingAndGlyphs"  stroke="#e0e0e0" stroke-width="0.15">1.36140</text>
<line x1="624.00" y1="198.10" x2="626.00" y2="198.10" stroke="#c8c8c8" stroke-width="0.8" />
<text x="626.4" y="200.0" font-size="5.2" fill="#e0e0e0" text-anchor="start" font-weight="normal" style="font-family:&quot;Liberation Sans&quot;" textLength="11" lengthAdjust="spacingAndGlyphs"  stroke="#e0e0e0" stroke-width="0.15">1.36050</text>
<line x1="624.00" y1="214.00" x2="626.00" y2="214.00" stroke="#c8c8c8" stroke-width="0.8" />
<text x="626.4" y="215.9" font-size="5.2" fill="#e0e0e0" text-anchor="start" font-weight="normal" style="font-family:&quot;Liberation Sans&quot;" textLength="11" lengthAdjust="spacingAndGlyphs"  stroke="#e0e0e0" stroke-width="0.15">1.35960</text>
<line x1="624.00" y1="229.90" x2="626.00" y2="229.90" stroke="#c8c8c8" stroke-width="0.8" />
<text x="626.4" y="231.8" font-size="5.2" fill="#e0e0e0" text-anchor="start" font-weight="normal" style="font-family:&quot;Liberation Sans&quot;" textLength="11" lengthAdjust="spacingAndGlyphs"  stroke="#e0e0e0" stroke-width="0.15">1.35870</text>
<line x1="624.00" y1="245.80" x2="626.00" y2="245.80" stroke="#c8c8c8" stroke-width="0.8" />
<text x="626.4" y="247.70000000000002" font-size="5.2" fill="#e0e0e0" text-anchor="start" font-weight="normal" style="font-family:&quot;Liberation Sans&quot;" textLength="11" lengthAdjust="spacingAndGlyphs"  stroke="#e0e0e0" stroke-width="0.15">1.35780</text>
<line x1="624.00" y1="261.70" x2="626.00" y2="261.70" stroke="#c8c8c8" stroke-width="0.8" />
<text x="626.4" y="263.6" font-size="5.2" fill="#e0e0e0" text-anchor="start" font-weight="normal" style="font-family:&quot;Liberation Sans&quot;" textLength="11" lengthAdjust="spacingAndGlyphs"  stroke="#e0e0e0" stroke-width="0.15">1.35690</text>
<line x1="624.00" y1="277.60" x2="626.00" y2="277.60" stroke="#c8c8c8" stroke-width="0.8" />
<text x="626.4" y="279.5" font-size="5.2" fill="#e0e0e0" text-anchor="start" font-weight="normal" style="font-family:&quot;Liberation Sans&quot;" textLength="11" lengthAdjust="spacingAndGlyphs"  stroke="#e0e0e0" stroke-width="0.15">1.35600</text>
<line x1="624.00" y1="293.50" x2="626.00" y2="293.50" stroke="#c8c8c8" stroke-width="0.8" />
<text x="626.4" y="295.4" font-size="5.2" fill="#e0e0e0" text-anchor="start" font-weight="normal" style="font-family:&quot;Liberation Sans&quot;" textLength="11" lengthAdjust="spacingAndGlyphs"  stroke="#e0e0e0" stroke-width="0.15">1.35510</text>
<line x1="624.00" y1="309.40" x2="626.00" y2="309.40" stroke="#c8c8c8" stroke-width="0.8" />
<text x="626.4" y="311.29999999999995" font-size="5.2" fill="#e0e0e0" text-anchor="start" font-weight="normal" style="font-family:&quot;Liberation Sans&quot;" textLength="11" lengthAdjust="spacingAndGlyphs"  stroke="#e0e0e0" stroke-width="0.15">1.35420</text>
<line x1="624.00" y1="325.30" x2="626.00" y2="325.30" stroke="#c8c8c8" stroke-width="0.8" />
<text x="626.4" y="327.2" font-size="5.2" fill="#e0e0e0" text-anchor="start" font-weight="normal" style="font-family:&quot;Liberation Sans&quot;" textLength="11" lengthAdjust="spacingAndGlyphs"  stroke="#e0e0e0" stroke-width="0.15">1.35330</text>
<line x1="624.00" y1="341.20" x2="626.00" y2="341.20" stroke="#c8c8c8" stroke-width="0.8" />
<text x="626.4" y="343.09999999999997" font-size="5.2" fill="#e0e0e0" text-anchor="start" font-weight="normal" style="font-family:&quot;Liberation Sans&quot;" textLength="11" lengthAdjust="spacingAndGlyphs"  stroke="#e0e0e0" stroke-width="0.15">1.35240</text>
<rect x="624.50" y="99.50" width="13.50" height="5.50" fill="#ffffff" />
<text x="626" y="103.9" font-size="5.2" fill="#111" text-anchor="start" font-weight="normal" style="font-family:&quot;Liberation Sans&quot;" textLength="11" lengthAdjust="spacingAndGlyphs"  stroke="#111" stroke-width="0.15">1.36591</text>
<line x1="66.50" y1="343.00" x2="66.50" y2="346.00" stroke="#c8c8c8" stroke-width="0.8" />
<line x1="87.90" y1="343.00" x2="87.90" y2="346.00" stroke="#c8c8c8" stroke-width="0.8" />
<line x1="109.30" y1="343.00" x2="109.30" y2="346.00" stroke="#c8c8c8" stroke-width="0.8" />
<line x1="130.70" y1="343.00" x2="130.70" y2="346.00" stroke="#c8c8c8" stroke-width="0.8" />
<line x1="152.10" y1="343.00" x2="152.10" y2="346.00" stroke="#c8c8c8" stroke-width="0.8" />
<line x1="173.50" y1="343.00" x2="173.50" y2="346.00" stroke="#c8c8c8" stroke-width="0.8" />
<line x1="194.90" y1="343.00" x2="194.90" y2="346.00" stroke="#c8c8c8" stroke-width="0.8" />
<line x1="216.30" y1="343.00" x2="216.30" y2="346.00" stroke="#c8c8c8" stroke-width="0.8" />
<line x1="237.70" y1="343.00" x2="237.70" y2="346.00" stroke="#c8c8c8" stroke-width="0.8" />
<line x1="259.10" y1="343.00" x2="259.10" y2="346.00" stroke="#c8c8c8" stroke-width="0.8" />
<line x1="280.50" y1="343.00" x2="280.50" y2="346.00" stroke="#c8c8c8" stroke-width="0.8" />
<line x1="301.90" y1="343.00" x2="301.90" y2="346.00" stroke="#c8c8c8" stroke-width="0.8" />
<line x1="323.30" y1="343.00" x2="323.30" y2="346.00" stroke="#c8c8c8" stroke-width="0.8" />
<line x1="344.70" y1="343.00" x2="344.70" y2="346.00" stroke="#c8c8c8" stroke-width="0.8" />
<line x1="366.10" y1="343.00" x2="366.10" y2="346.00" stroke="#c8c8c8" stroke-width="0.8" />
<line x1="387.50" y1="343.00" x2="387.50" y2="346.00" stroke="#c8c8c8" stroke-width="0.8" />
<line x1="408.90" y1="343.00" x2="408.90" y2="346.00" stroke="#c8c8c8" stroke-width="0.8" />
<line x1="430.30" y1="343.00" x2="430.30" y2="346.00" stroke="#c8c8c8" stroke-width="0.8" />
<line x1="451.70" y1="343.00" x2="451.70" y2="346.00" stroke="#c8c8c8" stroke-width="0.8" />
<line x1="473.10" y1="343.00" x2="473.10" y2="346.00" stroke="#c8c8c8" stroke-width="0.8" />
<line x1="494.50" y1="343.00" x2="494.50" y2="346.00" stroke="#c8c8c8" stroke-width="0.8" />
<text x="67.5" y="349.7" font-size="5.2" fill="#f0f0f0" text-anchor="start" font-weight="normal" style="font-family:&quot;Liberation Sans&quot;" textLength="17.5" lengthAdjust="spacingAndGlyphs" stroke="#f0f0f0" stroke-width="0.12">30 Dec 2020</text>
<text x="88.9" y="349.7" font-size="5.2" fill="#f0f0f0" text-anchor="start" font-weight="normal" style="font-family:&quot;Liberation Sans&quot;" textLength="17.5" lengthAdjust="spacingAndGlyphs" stroke="#f0f0f0" stroke-width="0.12">30 Dec 07:00</text>
<text x="110.3" y="349.7" font-size="5.2" fill="#f0f0f0" text-anchor="start" font-weight="normal" style="font-family:&quot;Liberation Sans&quot;" textLength="17.5" lengthAdjust="spacingAndGlyphs" stroke="#f0f0f0" stroke-width="0.12">30 Dec 09:00</text>
<text x="131.7" y="349.7" font-size="5.2" fill="#f0f0f0" text-anchor="start" font-weight="normal" style="font-family:&quot;Liberation Sans&quot;" textLength="17.5" lengthAdjust="spacingAndGlyphs" stroke="#f0f0f0" stroke-width="0.12">30 Dec 11:00</text>
<text x="153.1" y="349.7" font-size="5.2" fill="#f0f0f0" text-anchor="start" font-weight="normal" style="font-family:&quot;Liberation Sans&quot;" textLength="17.5" lengthAdjust="spacingAndGlyphs" stroke="#f0f0f0" stroke-width="0.12">30 Dec 13:00</text>
<text x="174.5" y="349.7" font-size="5.2" fill="#f0f0f0" text-anchor="start" font-weight="normal" style="font-family:&quot;Liberation Sans&quot;" textLength="17.5" lengthAdjust="spacingAndGlyphs" stroke="#f0f0f0" stroke-width="0.12">30 Dec 15:00</text>
<text x="195.89999999999998" y="349.7" font-size="5.2" fill="#f0f0f0" text-anchor="start" font-weight="normal" style="font-family:&quot;Liberation Sans&quot;" textLength="17.5" lengthAdjust="spacingAndGlyphs" stroke="#f0f0f0" stroke-width="0.12">30 Dec 17:00</text>
<text x="217.29999999999998" y="349.7" font-size="5.2" fill="#f0f0f0" text-anchor="start" font-weight="normal" style="font-family:&quot;Liberation Sans&quot;" textLength="17.5" lengthAdjust="spacingAndGlyphs" stroke="#f0f0f0" stroke-width="0.12">30 Dec 19:00</text>
<text x="238.7" y="349.7" font-size="5.2" fill="#f0f0f0" text-anchor="start" font-weight="normal" style="font-family:&quot;Liberation Sans&quot;" textLength="17.5" lengthAdjust="spacingAndGlyphs" stroke="#f0f0f0" stroke-width="0.12">30 Dec 21:00</text>
<text x="260.1" y="349.7" font-size="5.2" fill="#f0f0f0" text-anchor="start" font-weight="normal" style="font-family:&quot;Liberation Sans&quot;" textLength="17.5" lengthAdjust="spacingAndGlyphs" stroke="#f0f0f0" stroke-width="0.12">30 Dec 23:00</text>
<text x="281.5" y="349.7" font-size="5.2" fill="#f0f0f0" text-anchor="start" font-weight="normal" style="font-family:&quot;Liberation Sans&quot;" textLength="17.5" lengthAdjust="spacingAndGlyphs" stroke="#f0f0f0" stroke-width="0.12">31 Dec 01:00</text>
<text x="302.9" y="349.7" font-size="5.2" fill="#f0f0f0" text-anchor="start" font-weight="normal" style="font-family:&quot;Liberation Sans&quot;" textLength="17.5" lengthAdjust="spacingAndGlyphs" stroke="#f0f0f0" stroke-width="0.12">31 Dec 03:00</text>
<text x="324.29999999999995" y="349.7" font-size="5.2" fill="#f0f0f0" text-anchor="start" font-weight="normal" style="font-family:&quot;Liberation Sans&quot;" textLength="17.5" lengthAdjust="spacingAndGlyphs" stroke="#f0f0f0" stroke-width="0.12">31 Dec 05:00</text>
<text x="345.7" y="349.7" font-size="5.2" fill="#f0f0f0" text-anchor="start" font-weight="normal" style="font-family:&quot;Liberation Sans&quot;" textLength="17.5" lengthAdjust="spacingAndGlyphs" stroke="#f0f0f0" stroke-width="0.12">31 Dec 07:00</text>
<text x="367.09999999999997" y="349.7" font-size="5.2" fill="#f0f0f0" text-anchor="start" font-weight="normal" style="font-family:&quot;Liberation Sans&quot;" textLength="17.5" lengthAdjust="spacingAndGlyphs" stroke="#f0f0f0" stroke-width="0.12">31 Dec 09:00</text>
<text x="388.5" y="349.7" font-size="5.2" fill="#f0f0f0" text-anchor="start" font-weight="normal" style="font-family:&quot;Liberation Sans&quot;" textLength="17.5" lengthAdjust="spacingAndGlyphs" stroke="#f0f0f0" stroke-width="0.12">31 Dec 11:00</text>
<text x="409.9" y="349.7" font-size="5.2" fill="#f0f0f0" text-anchor="start" font-weight="normal" style="font-family:&quot;Liberation Sans&quot;" textLength="17.5" lengthAdjust="spacingAndGlyphs" stroke="#f0f0f0" stroke-width="0.12">31 Dec 13:00</text>
<text x="431.29999999999995" y="349.7" font-size="5.2" fill="#f0f0f0" text-anchor="start" font-weight="normal" style="font-family:&quot;Liberation Sans&quot;" textLength="17.5" lengthAdjust="spacingAndGlyphs" stroke="#f0f0f0" stroke-width="0.12">31 Dec 15:00</text>
<text x="452.7" y="349.7" font-size="5.2" fill="#f0f0f0" text-anchor="start" font-weight="normal" style="font-family:&quot;Liberation Sans&quot;" textLength="17.5" lengthAdjust="spacingAndGlyphs" stroke="#f0f0f0" stroke-width="0.12">31 Dec 17:00</text>
<text x="474.09999999999997" y="349.7" font-size="5.2" fill="#f0f0f0" text-anchor="start" font-weight="normal" style="font-family:&quot;Liberation Sans&quot;" textLength="17.5" lengthAdjust="spacingAndGlyphs" stroke="#f0f0f0" stroke-width="0.12">31 Dec 19:00</text>
<text x="495.5" y="349.7" font-size="5.2" fill="#f0f0f0" text-anchor="start" font-weight="normal" style="font-family:&quot;Liberation Sans&quot;" textLength="17.5" lengthAdjust="spacingAndGlyphs" stroke="#f0f0f0" stroke-width="0.12">31 Dec 21:00</text>
<line x1="67" y1="91.5" x2="623.5" y2="91.5" stroke="#9a1212" stroke-width="0.9" stroke-dasharray="3 2 1 2"/>
<line x1="67" y1="126.5" x2="623.5" y2="126.5" stroke="#128c12" stroke-width="0.9" stroke-dasharray="3 2 1 2"/>
<line x1="67" y1="144.5" x2="623.5" y2="144.5" stroke="#9a1212" stroke-width="0.9" stroke-dasharray="3 2 1 2"/>
<text x="69" y="89.2" font-size="5" fill="#f0f0f0" text-anchor="start" font-weight="normal" style="font-family:&quot;Liberation Sans&quot;" textLength="7.5" lengthAdjust="spacingAndGlyphs"  stroke="#f0f0f0" stroke-width="0.15">#1 tp</text>
<text x="69" y="124.2" font-size="5" fill="#f0f0f0" text-anchor="start" font-weight="normal" style="font-family:&quot;Liberation Sans&quot;" textLength="18" lengthAdjust="spacingAndGlyphs"  stroke="#f0f0f0" stroke-width="0.15">#1 buy 0.50</text>
<text x="69" y="142.2" font-size="5" fill="#f0f0f0" text-anchor="start" font-weight="normal" style="font-family:&quot;Liberation Sans&quot;" textLength="6.5" lengthAdjust="spacingAndGlyphs"  stroke="#f0f0f0" stroke-width="0.15">#1 sl</text>
<line x1="67.00" y1="102.00" x2="623.50" y2="102.00" stroke="#50565d" stroke-width="1.4" />
<line x1="67.30" y1="303.24" x2="67.30" y2="312.68" stroke="#16a016" stroke-width="0.8" />
<rect x="66.45" y="305.60" width="1.70" height="4.40" fill="#dcfcd4" stroke="#3cc03c" stroke-width="0.35" />
<line x1="69.80" y1="306.00" x2="69.80" y2="311.00" stroke="#0c960c" stroke-width="0.9" />
<rect x="68.95" y="307.43" width="1.70" height="2.55" fill="#0e640e" stroke="#20a020" stroke-width="0.4" />
<line x1="72.90" y1="304.48" x2="72.90" y2="316.76" stroke="#16a016" stroke-width="0.8" />
<rect x="72.05" y="307.00" width="1.70" height="7.00" fill="#dcfcd4" stroke="#3cc03c" stroke-width="0.35" />
<line x1="75.40" y1="312.25" x2="75.40" y2="320.54" stroke="#16a016" stroke-width="0.8" />
<rect x="74.55" y="313.80" width="1.70" height="4.20" fill="#dcfcd4" stroke="#3cc03c" stroke-width="0.35" />
<line x1="77.90" y1="307.00" x2="77.90" y2="318.00" stroke="#0c960c" stroke-width="0.9" />
<rect x="77.05" y="309.57" width="1.70" height="5.54" fill="#0e640e" stroke="#20a020" stroke-width="0.4" />
<line x1="80.80" y1="306.22" x2="80.80" y2="312.51" stroke="#16a016" stroke-width="0.8" />
<rect x="79.95" y="307.50" width="1.70" height="3.10" fill="#dcfcd4" stroke="#3cc03c" stroke-width="0.35" />
<line x1="83.50" y1="307.00" x2="83.50" y2="310.00" stroke="#0c960c" stroke-width="0.9" />
<rect x="82.65" y="307.41" width="1.70" height="1.79" fill="#0e640e" stroke="#20a020" stroke-width="0.4" />
<line x1="86.00" y1="303.92" x2="86.00" y2="311.13" stroke="#16a016" stroke-width="0.8" />
<rect x="85.15" y="307.00" width="1.70" height="3.00" fill="#dcfcd4" stroke="#3cc03c" stroke-width="0.35" />
<line x1="88.80" y1="282.50" x2="88.80" y2="311.00" stroke="#0c960c" stroke-width="0.9" />
<rect x="87.95" y="290.96" width="1.70" height="11.67" fill="#0e640e" stroke="#20a020" stroke-width="0.4" />
<line x1="91.60" y1="285.79" x2="91.60" y2="303.85" stroke="#16a016" stroke-width="0.8" />
<rect x="90.75" y="288.75" width="1.70" height="12.25" fill="#dcfcd4" stroke="#3cc03c" stroke-width="0.35" />
<line x1="94.00" y1="297.53" x2="94.00" y2="304.05" stroke="#16a016" stroke-width="0.8" />
<rect x="93.15" y="299.00" width="1.70" height="4.00" fill="#dcfcd4" stroke="#3cc03c" stroke-width="0.35" />
<line x1="97.00" y1="299.41" x2="97.00" y2="306.78" stroke="#16a016" stroke-width="0.8" />
<rect x="96.15" y="302.00" width="1.70" height="3.60" fill="#dcfcd4" stroke="#3cc03c" stroke-width="0.35" />
<line x1="99.50" y1="303.43" x2="99.50" y2="324.23" stroke="#16a016" stroke-width="0.8" />
<rect x="98.65" y="305.00" width="1.70" height="17.50" fill="#dcfcd4" stroke="#3cc03c" stroke-width="0.35" />
<line x1="102.30" y1="321.41" x2="102.30" y2="329.89" stroke="#16a016" stroke-width="0.8" />
<rect x="101.45" y="322.50" width="1.70" height="5.00" fill="#dcfcd4" stroke="#3cc03c" stroke-width="0.35" />
<line x1="104.75" y1="320.00" x2="104.75" y2="328.75" stroke="#0c960c" stroke-width="0.9" />
<rect x="103.90" y="321.74" width="1.70" height="4.63" fill="#0e640e" stroke="#20a020" stroke-width="0.4" />
<line x1="107.25" y1="306.00" x2="107.25" y2="322.50" stroke="#0c960c" stroke-width="0.9" />
<rect x="106.40" y="309.52" width="1.70" height="9.10" fill="#0e640e" stroke="#20a020" stroke-width="0.4" />
<line x1="109.75" y1="295.00" x2="109.75" y2="315.00" stroke="#0c960c" stroke-width="0.9" />
<rect x="108.90" y="299.20" width="1.70" height="11.02" fill="#0e640e" stroke="#20a020" stroke-width="0.4" />
<line x1="112.90" y1="299.00" x2="112.90" y2="310.00" stroke="#0c960c" stroke-width="0.9" />
<rect x="112.05" y="301.23" width="1.70" height="6.90" fill="#0e640e" stroke="#20a020" stroke-width="0.4" />
<line x1="115.40" y1="295.01" x2="115.40" y2="328.99" stroke="#16a016" stroke-width="0.8" />
<rect x="114.55" y="299.00" width="1.70" height="26.00" fill="#dcfcd4" stroke="#3cc03c" stroke-width="0.35" />
<line x1="117.90" y1="320.23" x2="117.90" y2="330.62" stroke="#16a016" stroke-width="0.8" />
<rect x="117.05" y="323.75" width="1.70" height="3.75" fill="#dcfcd4" stroke="#3cc03c" stroke-width="0.35" />
<line x1="120.40" y1="308.75" x2="120.40" y2="327.50" stroke="#0c960c" stroke-width="0.9" />
<rect x="119.55" y="312.06" width="1.70" height="12.41" fill="#0e640e" stroke="#20a020" stroke-width="0.4" />
<line x1="123.50" y1="308.75" x2="123.50" y2="320.00" stroke="#0c960c" stroke-width="0.9" />
<rect x="122.65" y="310.69" width="1.70" height="7.82" fill="#0e640e" stroke="#20a020" stroke-width="0.4" />
<line x1="126.00" y1="307.50" x2="126.00" y2="318.75" stroke="#0c960c" stroke-width="0.9" />
<rect x="125.15" y="310.40" width="1.70" height="6.19" fill="#0e640e" stroke="#20a020" stroke-width="0.4" />
<line x1="128.50" y1="287.50" x2="128.50" y2="310.00" stroke="#0c960c" stroke-width="0.9" />
<rect x="127.65" y="293.63" width="1.70" height="12.11" fill="#0e640e" stroke="#20a020" stroke-width="0.4" />
<line x1="131.00" y1="270.00" x2="131.00" y2="295.00" stroke="#0c960c" stroke-width="0.9" />
<rect x="130.15" y="277.31" width="1.70" height="10.88" fill="#0e640e" stroke="#20a020" stroke-width="0.4" />
<line x1="134.00" y1="243.00" x2="134.00" y2="258.00" stroke="#0c960c" stroke-width="0.9" />
<rect x="133.15" y="244.80" width="1.70" height="10.83" fill="#0e640e" stroke="#20a020" stroke-width="0.4" />
<line x1="136.50" y1="245.00" x2="136.50" y2="258.00" stroke="#0c960c" stroke-width="0.9" />
<rect x="135.65" y="248.69" width="1.70" height="6.65" fill="#0e640e" stroke="#20a020" stroke-width="0.4" />
<line x1="139.00" y1="241.00" x2="139.00" y2="256.00" stroke="#0c960c" stroke-width="0.9" />
<rect x="138.15" y="245.45" width="1.70" height="7.68" fill="#0e640e" stroke="#20a020" stroke-width="0.4" />
<line x1="142.00" y1="238.00" x2="142.00" y2="252.00" stroke="#0c960c" stroke-width="0.9" />
<rect x="141.15" y="239.86" width="1.70" height="8.87" fill="#0e640e" stroke="#20a020" stroke-width="0.4" />
<line x1="145.00" y1="230.00" x2="145.00" y2="247.00" stroke="#0c960c" stroke-width="0.9" />
<rect x="144.15" y="234.42" width="1.70" height="9.71" fill="#0e640e" stroke="#20a020" stroke-width="0.4" />
<line x1="147.80" y1="218.80" x2="147.80" y2="230.00" stroke="#0c960c" stroke-width="0.9" />
<rect x="146.95" y="220.32" width="1.70" height="7.67" fill="#0e640e" stroke="#20a020" stroke-width="0.4" />
<line x1="150.30" y1="188.75" x2="150.30" y2="226.00" stroke="#0c960c" stroke-width="0.9" />
<rect x="149.45" y="199.68" width="1.70" height="16.76" fill="#0e640e" stroke="#20a020" stroke-width="0.4" />
<line x1="152.90" y1="193.65" x2="152.90" y2="209.24" stroke="#16a016" stroke-width="0.8" />
<rect x="152.05" y="195.00" width="1.70" height="12.50" fill="#dcfcd4" stroke="#3cc03c" stroke-width="0.35" />
<line x1="155.30" y1="206.20" x2="155.30" y2="220.88" stroke="#16a016" stroke-width="0.8" />
<rect x="154.45" y="207.50" width="1.70" height="12.20" fill="#dcfcd4" stroke="#3cc03c" stroke-width="0.35" />
<line x1="158.10" y1="205.60" x2="158.10" y2="218.80" stroke="#0c960c" stroke-width="0.9" />
<rect x="157.25" y="209.08" width="1.70" height="7.72" fill="#0e640e" stroke="#20a020" stroke-width="0.4" />
<line x1="161.00" y1="180.00" x2="161.00" y2="207.50" stroke="#0c960c" stroke-width="0.9" />
<rect x="160.15" y="186.07" width="1.70" height="15.92" fill="#0e640e" stroke="#20a020" stroke-width="0.4" />
<line x1="163.40" y1="187.18" x2="163.40" y2="199.20" stroke="#16a016" stroke-width="0.8" />
<rect x="162.55" y="188.75" width="1.70" height="7.25" fill="#dcfcd4" stroke="#3cc03c" stroke-width="0.35" />
<line x1="166.00" y1="195.61" x2="166.00" y2="223.53" stroke="#16a016" stroke-width="0.8" />
<rect x="165.15" y="197.00" width="1.70" height="23.60" fill="#dcfcd4" stroke="#3cc03c" stroke-width="0.35" />
<line x1="169.00" y1="202.00" x2="169.00" y2="224.40" stroke="#0c960c" stroke-width="0.9" />
<rect x="168.15" y="205.16" width="1.70" height="14.86" fill="#0e640e" stroke="#20a020" stroke-width="0.4" />
<line x1="171.65" y1="207.36" x2="171.65" y2="217.81" stroke="#16a016" stroke-width="0.8" />
<rect x="170.80" y="209.00" width="1.70" height="7.00" fill="#dcfcd4" stroke="#3cc03c" stroke-width="0.35" />
<line x1="174.00" y1="207.50" x2="174.00" y2="233.80" stroke="#0c960c" stroke-width="0.9" />
<rect x="173.15" y="215.25" width="1.70" height="11.59" fill="#0e640e" stroke="#20a020" stroke-width="0.4" />
<line x1="176.90" y1="206.59" x2="176.90" y2="218.65" stroke="#16a016" stroke-width="0.8" />
<rect x="176.05" y="208.50" width="1.70" height="6.50" fill="#dcfcd4" stroke="#3cc03c" stroke-width="0.35" />
<line x1="179.70" y1="196.00" x2="179.70" y2="217.00" stroke="#0c960c" stroke-width="0.9" />
<rect x="178.85" y="199.32" width="1.70" height="13.67" fill="#0e640e" stroke="#20a020" stroke-width="0.4" />
<line x1="182.20" y1="194.00" x2="182.20" y2="211.00" stroke="#0c960c" stroke-width="0.9" />
<rect x="181.35" y="198.65" width="1.70" height="8.34" fill="#0e640e" stroke="#20a020" stroke-width="0.4" />
<line x1="184.80" y1="181.00" x2="184.80" y2="224.00" stroke="#0c960c" stroke-width="0.9" />
<rect x="183.95" y="186.94" width="1.70" height="24.25" fill="#0e640e" stroke="#20a020" stroke-width="0.4" />
<line x1="187.80" y1="201.16" x2="187.80" y2="250.57" stroke="#16a016" stroke-width="0.8" />
<rect x="186.95" y="202.80" width="1.70" height="46.00" fill="#dcfcd4" stroke="#3cc03c" stroke-width="0.35" />
<line x1="190.40" y1="233.80" x2="190.40" y2="254.40" stroke="#0c960c" stroke-width="0.9" />
<rect x="189.55" y="239.14" width="1.70" height="11.57" fill="#0e640e" stroke="#20a020" stroke-width="0.4" />
<line x1="192.85" y1="200.00" x2="192.85" y2="241.00" stroke="#0c960c" stroke-width="0.9" />
<rect x="192.00" y="207.11" width="1.70" height="28.43" fill="#0e640e" stroke="#20a020" stroke-width="0.4" />
<line x1="195.70" y1="198.73" x2="195.70" y2="223.35" stroke="#16a016" stroke-width="0.8" />
<rect x="194.85" y="200.00" width="1.70" height="20.60" fill="#dcfcd4" stroke="#3cc03c" stroke-width="0.35" />
<line x1="198.50" y1="198.00" x2="198.50" y2="226.00" stroke="#0c960c" stroke-width="0.9" />
<rect x="197.65" y="202.58" width="1.70" height="17.02" fill="#0e640e" stroke="#20a020" stroke-width="0.4" />
<line x1="201.00" y1="190.60" x2="201.00" y2="215.00" stroke="#0c960c" stroke-width="0.9" />
<rect x="200.15" y="195.16" width="1.70" height="14.92" fill="#0e640e" stroke="#20a020" stroke-width="0.4" />
<line x1="203.50" y1="173.75" x2="203.50" y2="211.00" stroke="#0c960c" stroke-width="0.9" />
<rect x="202.65" y="184.65" width="1.70" height="18.64" fill="#0e640e" stroke="#20a020" stroke-width="0.4" />
<line x1="206.00" y1="190.78" x2="206.00" y2="213.60" stroke="#16a016" stroke-width="0.8" />
<rect x="205.15" y="193.50" width="1.70" height="16.50" fill="#dcfcd4" stroke="#3cc03c" stroke-width="0.35" />
<line x1="208.80" y1="207.45" x2="208.80" y2="222.06" stroke="#16a016" stroke-width="0.8" />
<rect x="207.95" y="209.00" width="1.70" height="11.60" fill="#dcfcd4" stroke="#3cc03c" stroke-width="0.35" />
<line x1="211.60" y1="203.80" x2="211.60" y2="220.70" stroke="#0c960c" stroke-width="0.9" />
<rect x="210.75" y="208.59" width="1.70" height="7.59" fill="#0e640e" stroke="#20a020" stroke-width="0.4" />
<line x1="213.90" y1="201.00" x2="213.90" y2="215.00" stroke="#0c960c" stroke-width="0.9" />
<rect x="213.05" y="203.31" width="1.70" height="9.53" fill="#0e640e" stroke="#20a020" stroke-width="0.4" />
<line x1="216.90" y1="192.50" x2="216.90" y2="205.70" stroke="#0c960c" stroke-width="0.9" />
<rect x="216.05" y="195.84" width="1.70" height="6.04" fill="#0e640e" stroke="#20a020" stroke-width="0.4" />
<line x1="219.50" y1="196.30" x2="219.50" y2="209.40" stroke="#0c960c" stroke-width="0.9" />
<rect x="218.65" y="198.34" width="1.70" height="7.25" fill="#0e640e" stroke="#20a020" stroke-width="0.4" />
<line x1="222.00" y1="198.00" x2="222.00" y2="205.70" stroke="#0c960c" stroke-width="0.9" />
<rect x="221.15" y="200.15" width="1.70" height="3.79" fill="#0e640e" stroke="#20a020" stroke-width="0.4" />
<line x1="224.80" y1="195.74" x2="224.80" y2="211.31" stroke="#16a016" stroke-width="0.8" />
<rect x="223.95" y="198.00" width="1.70" height="12.00" fill="#dcfcd4" stroke="#3cc03c" stroke-width="0.35" />
<line x1="227.60" y1="187.80" x2="227.60" y2="213.00" stroke="#0c960c" stroke-width="0.9" />
<rect x="226.75" y="191.00" width="1.70" height="14.61" fill="#0e640e" stroke="#20a020" stroke-width="0.4" />
<line x1="230.40" y1="187.80" x2="230.40" y2="191.60" stroke="#0c960c" stroke-width="0.9" />
<rect x="229.55" y="188.42" width="1.70" height="2.24" fill="#0e640e" stroke="#20a020" stroke-width="0.4" />
<line x1="233.20" y1="183.00" x2="233.20" y2="192.50" stroke="#0c960c" stroke-width="0.9" />
<rect x="232.35" y="184.58" width="1.70" height="5.37" fill="#0e640e" stroke="#20a020" stroke-width="0.4" />
<line x1="235.60" y1="178.50" x2="235.60" y2="191.60" stroke="#0c960c" stroke-width="0.9" />
<rect x="234.75" y="181.48" width="1.70" height="7.86" fill="#0e640e" stroke="#20a020" stroke-width="0.4" />
<line x1="238.30" y1="175.60" x2="238.30" y2="187.00" stroke="#0c960c" stroke-width="0.9" />
<rect x="237.45" y="177.33" width="1.70" height="6.83" fill="#0e640e" stroke="#20a020" stroke-width="0.4" />
<line x1="240.70" y1="178.19" x2="240.70" y2="187.69" stroke="#16a016" stroke-width="0.8" />
<rect x="239.85" y="179.40" width="1.70" height="6.60" fill="#dcfcd4" stroke="#3cc03c" stroke-width="0.35" />
<line x1="243.50" y1="185.00" x2="243.50" y2="194.40" stroke="#0c960c" stroke-width="0.9" />
<rect x="242.65" y="187.07" width="1.70" height="4.76" fill="#0e640e" stroke="#20a020" stroke-width="0.4" />
<line x1="246.30" y1="179.40" x2="246.30" y2="190.70" stroke="#0c960c" stroke-width="0.9" />
<rect x="245.45" y="182.01" width="1.70" height="6.77" fill="#0e640e" stroke="#20a020" stroke-width="0.4" />
<line x1="248.80" y1="175.60" x2="248.80" y2="188.80" stroke="#0c960c" stroke-width="0.9" />
<rect x="247.95" y="179.36" width="1.70" height="7.37" fill="#0e640e" stroke="#20a020" stroke-width="0.4" />
<line x1="251.40" y1="162.50" x2="251.40" y2="177.50" stroke="#0c960c" stroke-width="0.9" />
<rect x="250.55" y="164.34" width="1.70" height="10.63" fill="#0e640e" stroke="#20a020" stroke-width="0.4" />
<line x1="254.20" y1="162.96" x2="254.20" y2="168.38" stroke="#16a016" stroke-width="0.8" />
<rect x="253.35" y="165.30" width="1.70" height="1.90" fill="#dcfcd4" stroke="#3cc03c" stroke-width="0.35" />
<line x1="257.00" y1="164.77" x2="257.00" y2="178.71" stroke="#16a016" stroke-width="0.8" />
<rect x="256.15" y="166.30" width="1.70" height="10.30" fill="#dcfcd4" stroke="#3cc03c" stroke-width="0.35" />
<line x1="259.50" y1="172.88" x2="259.50" y2="181.69" stroke="#16a016" stroke-width="0.8" />
<rect x="258.65" y="175.60" width="1.70" height="4.70" fill="#dcfcd4" stroke="#3cc03c" stroke-width="0.35" />
<line x1="262.30" y1="170.00" x2="262.30" y2="185.00" stroke="#0c960c" stroke-width="0.9" />
<rect x="261.45" y="172.78" width="1.70" height="8.02" fill="#0e640e" stroke="#20a020" stroke-width="0.4" />
<line x1="265.00" y1="168.10" x2="265.00" y2="177.50" stroke="#0c960c" stroke-width="0.9" />
<rect x="264.15" y="170.89" width="1.70" height="4.37" fill="#0e640e" stroke="#20a020" stroke-width="0.4" />
<line x1="267.50" y1="161.60" x2="267.50" y2="173.80" stroke="#0c960c" stroke-width="0.9" />
<rect x="266.65" y="164.58" width="1.70" height="6.47" fill="#0e640e" stroke="#20a020" stroke-width="0.4" />
<line x1="270.35" y1="163.88" x2="270.35" y2="178.61" stroke="#16a016" stroke-width="0.8" />
<rect x="269.50" y="165.30" width="1.70" height="12.20" fill="#dcfcd4" stroke="#3cc03c" stroke-width="0.35" />
<line x1="273.00" y1="180.95" x2="273.00" y2="193.43" stroke="#16a016" stroke-width="0.8" />
<rect x="272.15" y="182.00" width="1.70" height="7.70" fill="#dcfcd4" stroke="#3cc03c" stroke-width="0.35" />
<line x1="275.80" y1="183.00" x2="275.80" y2="192.50" stroke="#0c960c" stroke-width="0.9" />
<rect x="274.95" y="185.34" width="1.70" height="4.38" fill="#0e640e" stroke="#20a020" stroke-width="0.4" />
<line x1="278.40" y1="180.30" x2="278.40" y2="188.80" stroke="#0c960c" stroke-width="0.9" />
<rect x="277.55" y="181.35" width="1.70" height="5.45" fill="#0e640e" stroke="#20a020" stroke-width="0.4" />
<line x1="281.00" y1="157.00" x2="281.00" y2="181.00" stroke="#0c960c" stroke-width="0.9" />
<rect x="280.15" y="161.96" width="1.70" height="13.00" fill="#0e640e" stroke="#20a020" stroke-width="0.4" />
<line x1="283.70" y1="155.84" x2="283.70" y2="169.30" stroke="#16a016" stroke-width="0.8" />
<rect x="282.85" y="157.80" width="1.70" height="7.50" fill="#dcfcd4" stroke="#3cc03c" stroke-width="0.35" />
<line x1="286.50" y1="155.00" x2="286.50" y2="166.00" stroke="#0c960c" stroke-width="0.9" />
<rect x="285.65" y="156.47" width="1.70" height="7.13" fill="#0e640e" stroke="#20a020" stroke-width="0.4" />
<line x1="289.00" y1="150.00" x2="289.00" y2="162.00" stroke="#0c960c" stroke-width="0.9" />
<rect x="288.15" y="153.03" width="1.70" height="5.58" fill="#0e640e" stroke="#20a020" stroke-width="0.4" />
<line x1="291.50" y1="152.79" x2="291.50" y2="162.11" stroke="#16a016" stroke-width="0.8" />
<rect x="290.65" y="156.00" width="1.70" height="3.00" fill="#dcfcd4" stroke="#3cc03c" stroke-width="0.35" />
<line x1="294.00" y1="135.00" x2="294.00" y2="157.50" stroke="#0c960c" stroke-width="0.9" />
<rect x="293.15" y="140.91" width="1.70" height="10.18" fill="#0e640e" stroke="#20a020" stroke-width="0.4" />
<line x1="296.50" y1="127.50" x2="296.50" y2="137.50" stroke="#0c960c" stroke-width="0.9" />
<rect x="295.65" y="129.33" width="1.70" height="5.73" fill="#0e640e" stroke="#20a020" stroke-width="0.4" />
<line x1="299.00" y1="120.00" x2="299.00" y2="132.50" stroke="#0c960c" stroke-width="0.9" />
<rect x="298.15" y="123.53" width="1.70" height="5.51" fill="#0e640e" stroke="#20a020" stroke-width="0.4" />
<line x1="302.00" y1="126.50" x2="302.00" y2="134.62" stroke="#16a016" stroke-width="0.8" />
<rect x="301.15" y="128.75" width="1.70" height="2.50" fill="#dcfcd4" stroke="#3cc03c" stroke-width="0.35" />
<line x1="304.50" y1="122.50" x2="304.50" y2="137.50" stroke="#0c960c" stroke-width="0.9" />
<rect x="303.65" y="126.63" width="1.70" height="7.52" fill="#0e640e" stroke="#20a020" stroke-width="0.4" />
<line x1="307.75" y1="128.38" x2="307.75" y2="135.90" stroke="#16a016" stroke-width="0.8" />
<rect x="306.90" y="131.25" width="1.70" height="2.50" fill="#dcfcd4" stroke="#3cc03c" stroke-width="0.35" />
<line x1="310.00" y1="123.75" x2="310.00" y2="136.25" stroke="#0c960c" stroke-width="0.9" />
<rect x="309.15" y="126.56" width="1.70" height="6.82" fill="#0e640e" stroke="#20a020" stroke-width="0.4" />
<line x1="312.75" y1="118.75" x2="312.75" y2="130.00" stroke="#0c960c" stroke-width="0.9" />
<rect x="311.90" y="120.26" width="1.70" height="7.09" fill="#0e640e" stroke="#20a020" stroke-width="0.4" />
<line x1="315.25" y1="118.52" x2="315.25" y2="131.14" stroke="#16a016" stroke-width="0.8" />
<rect x="314.40" y="122.50" width="1.70" height="5.00" fill="#dcfcd4" stroke="#3cc03c" stroke-width="0.35" />
<line x1="317.75" y1="124.32" x2="317.75" y2="160.92" stroke="#16a016" stroke-width="0.8" />
<rect x="316.90" y="127.50" width="1.70" height="31.25" fill="#dcfcd4" stroke="#3cc03c" stroke-width="0.35" />
<line x1="321.00" y1="154.29" x2="321.00" y2="200.00" stroke="#16a016" stroke-width="0.8" />
<rect x="320.15" y="157.50" width="1.70" height="22.50" fill="#dcfcd4" stroke="#3cc03c" stroke-width="0.35" />
<line x1="323.50" y1="171.43" x2="323.50" y2="184.52" stroke="#16a016" stroke-width="0.8" />
<rect x="322.65" y="173.75" width="1.70" height="7.25" fill="#dcfcd4" stroke="#3cc03c" stroke-width="0.35" />
<line x1="326.00" y1="172.50" x2="326.00" y2="186.25" stroke="#0c960c" stroke-width="0.9" />
<rect x="325.15" y="174.36" width="1.70" height="8.39" fill="#0e640e" stroke="#20a020" stroke-width="0.4" />
<line x1="328.50" y1="175.00" x2="328.50" y2="182.50" stroke="#0c960c" stroke-width="0.9" />
<rect x="327.65" y="175.94" width="1.70" height="4.85" fill="#0e640e" stroke="#20a020" stroke-width="0.4" />
<line x1="331.50" y1="175.06" x2="331.50" y2="181.69" stroke="#16a016" stroke-width="0.8" />
<rect x="330.65" y="177.50" width="1.70" height="2.50" fill="#dcfcd4" stroke="#3cc03c" stroke-width="0.35" />
<line x1="334.00" y1="171.25" x2="334.00" y2="182.50" stroke="#0c960c" stroke-width="0.9" />
<rect x="333.15" y="174.01" width="1.70" height="6.13" fill="#0e640e" stroke="#20a020" stroke-width="0.4" />
<line x1="337.00" y1="170.91" x2="337.00" y2="186.26" stroke="#16a016" stroke-width="0.8" />
<rect x="336.15" y="173.75" width="1.70" height="8.75" fill="#dcfcd4" stroke="#3cc03c" stroke-width="0.35" />
<line x1="339.50" y1="176.25" x2="339.50" y2="183.75" stroke="#0c960c" stroke-width="0.9" />
<rect x="338.65" y="177.50" width="1.70" height="5.34" fill="#0e640e" stroke="#20a020" stroke-width="0.4" />
<line x1="342.00" y1="176.25" x2="342.00" y2="185.00" stroke="#0c960c" stroke-width="0.9" />
<rect x="341.15" y="177.77" width="1.70" height="5.11" fill="#0e640e" stroke="#20a020" stroke-width="0.4" />
<line x1="345.25" y1="172.50" x2="345.25" y2="182.50" stroke="#0c960c" stroke-width="0.9" />
<rect x="344.40" y="174.06" width="1.70" height="6.93" fill="#0e640e" stroke="#20a020" stroke-width="0.4" />
<line x1="347.75" y1="166.25" x2="347.75" y2="175.00" stroke="#0c960c" stroke-width="0.9" />
<rect x="346.90" y="168.73" width="1.70" height="4.18" fill="#0e640e" stroke="#20a020" stroke-width="0.4" />
<line x1="350.25" y1="158.75" x2="350.25" y2="170.00" stroke="#0c960c" stroke-width="0.9" />
<rect x="349.40" y="160.99" width="1.70" height="5.85" fill="#0e640e" stroke="#20a020" stroke-width="0.4" />
<line x1="352.75" y1="158.02" x2="352.75" y2="165.50" stroke="#16a016" stroke-width="0.8" />
<rect x="351.90" y="160.00" width="1.70" height="2.50" fill="#dcfcd4" stroke="#3cc03c" stroke-width="0.35" />
<line x1="355.25" y1="152.50" x2="355.25" y2="165.00" stroke="#0c960c" stroke-width="0.9" />
<rect x="354.40" y="154.45" width="1.70" height="8.08" fill="#0e640e" stroke="#20a020" stroke-width="0.4" />
<line x1="357.75" y1="142.50" x2="357.75" y2="157.50" stroke="#0c960c" stroke-width="0.9" />
<rect x="356.90" y="146.48" width="1.70" height="6.76" fill="#0e640e" stroke="#20a020" stroke-width="0.4" />
<line x1="360.25" y1="140.11" x2="360.25" y2="153.15" stroke="#16a016" stroke-width="0.8" />
<rect x="359.40" y="143.75" width="1.70" height="7.25" fill="#dcfcd4" stroke="#3cc03c" stroke-width="0.35" />
<line x1="362.75" y1="147.25" x2="362.75" y2="160.70" stroke="#16a016" stroke-width="0.8" />
<rect x="361.90" y="150.00" width="1.70" height="8.75" fill="#dcfcd4" stroke="#3cc03c" stroke-width="0.35" />
<line x1="366.25" y1="140.00" x2="366.25" y2="160.00" stroke="#0c960c" stroke-width="0.9" />
<rect x="365.40" y="142.89" width="1.70" height="12.92" fill="#0e640e" stroke="#20a020" stroke-width="0.4" />
<line x1="368.75" y1="127.50" x2="368.75" y2="152.50" stroke="#0c960c" stroke-width="0.9" />
<rect x="367.90" y="134.27" width="1.70" height="11.41" fill="#0e640e" stroke="#20a020" stroke-width="0.4" />
<line x1="371.25" y1="125.00" x2="371.25" y2="140.00" stroke="#0c960c" stroke-width="0.9" />
<rect x="370.40" y="128.72" width="1.70" height="6.91" fill="#0e640e" stroke="#20a020" stroke-width="0.4" />
<line x1="373.75" y1="107.50" x2="373.75" y2="130.00" stroke="#0c960c" stroke-width="0.9" />
<rect x="372.90" y="111.32" width="1.70" height="15.29" fill="#0e640e" stroke="#20a020" stroke-width="0.4" />
<line x1="376.75" y1="108.65" x2="376.75" y2="129.33" stroke="#16a016" stroke-width="0.8" />
<rect x="375.90" y="111.00" width="1.70" height="16.50" fill="#dcfcd4" stroke="#3cc03c" stroke-width="0.35" />
<line x1="379.50" y1="102.50" x2="379.50" y2="117.50" stroke="#0c960c" stroke-width="0.9" />
<rect x="378.65" y="104.88" width="1.70" height="9.70" fill="#0e640e" stroke="#20a020" stroke-width="0.4" />
<line x1="382.00" y1="95.00" x2="382.00" y2="110.00" stroke="#0c960c" stroke-width="0.9" />
<rect x="381.15" y="98.49" width="1.70" height="8.38" fill="#0e640e" stroke="#20a020" stroke-width="0.4" />
<line x1="385.00" y1="82.50" x2="385.00" y2="105.00" stroke="#0c960c" stroke-width="0.9" />
<rect x="384.15" y="86.48" width="1.70" height="12.42" fill="#0e640e" stroke="#20a020" stroke-width="0.4" />
<line x1="387.50" y1="83.55" x2="387.50" y2="97.36" stroke="#16a016" stroke-width="0.8" />
<rect x="386.65" y="87.50" width="1.70" height="7.50" fill="#dcfcd4" stroke="#3cc03c" stroke-width="0.35" />
<line x1="390.00" y1="93.78" x2="390.00" y2="106.09" stroke="#16a016" stroke-width="0.8" />
<rect x="389.15" y="95.00" width="1.70" height="10.00" fill="#dcfcd4" stroke="#3cc03c" stroke-width="0.35" />
<line x1="392.50" y1="102.50" x2="392.50" y2="112.50" stroke="#0c960c" stroke-width="0.9" />
<rect x="391.65" y="105.27" width="1.70" height="5.95" fill="#0e640e" stroke="#20a020" stroke-width="0.4" />
<line x1="395.00" y1="87.50" x2="395.00" y2="107.50" stroke="#0c960c" stroke-width="0.9" />
<rect x="394.15" y="92.45" width="1.70" height="10.59" fill="#0e640e" stroke="#20a020" stroke-width="0.4" />
<line x1="397.50" y1="90.00" x2="397.50" y2="102.50" stroke="#0c960c" stroke-width="0.9" />
<rect x="396.65" y="92.20" width="1.70" height="7.02" fill="#0e640e" stroke="#20a020" stroke-width="0.4" />
<line x1="400.00" y1="67.50" x2="400.00" y2="97.50" stroke="#0c960c" stroke-width="0.9" />
<rect x="399.15" y="71.20" width="1.70" height="21.96" fill="#0e640e" stroke="#20a020" stroke-width="0.4" />
<line x1="403.00" y1="54.00" x2="403.00" y2="83.57" stroke="#16a016" stroke-width="0.8" />
<rect x="402.15" y="67.50" width="1.70" height="15.00" fill="#dcfcd4" stroke="#3cc03c" stroke-width="0.35" />
<line x1="405.75" y1="72.50" x2="405.75" y2="85.00" stroke="#0c960c" stroke-width="0.9" />
<rect x="404.90" y="75.87" width="1.70" height="7.10" fill="#0e640e" stroke="#20a020" stroke-width="0.4" />
<line x1="408.75" y1="74.58" x2="408.75" y2="112.14" stroke="#16a016" stroke-width="0.8" />
<rect x="407.90" y="76.00" width="1.70" height="35.00" fill="#dcfcd4" stroke="#3cc03c" stroke-width="0.35" />
<line x1="411.25" y1="108.11" x2="411.25" y2="119.84" stroke="#16a016" stroke-width="0.8" />
<rect x="410.40" y="111.00" width="1.70" height="6.50" fill="#dcfcd4" stroke="#3cc03c" stroke-width="0.35" />
<line x1="413.75" y1="102.50" x2="413.75" y2="130.00" stroke="#0c960c" stroke-width="0.9" />
<rect x="412.90" y="108.92" width="1.70" height="14.54" fill="#0e640e" stroke="#20a020" stroke-width="0.4" />
<line x1="417.00" y1="114.08" x2="417.00" y2="124.88" stroke="#16a016" stroke-width="0.8" />
<rect x="416.15" y="117.50" width="1.70" height="3.50" fill="#dcfcd4" stroke="#3cc03c" stroke-width="0.35" />
<line x1="419.50" y1="102.50" x2="419.50" y2="127.50" stroke="#0c960c" stroke-width="0.9" />
<rect x="418.65" y="108.58" width="1.70" height="15.02" fill="#0e640e" stroke="#20a020" stroke-width="0.4" />
<line x1="422.00" y1="98.57" x2="422.00" y2="112.54" stroke="#16a016" stroke-width="0.8" />
<rect x="421.15" y="101.00" width="1.70" height="10.00" fill="#dcfcd4" stroke="#3cc03c" stroke-width="0.35" />
<line x1="424.50" y1="108.97" x2="424.50" y2="116.17" stroke="#16a016" stroke-width="0.8" />
<rect x="423.65" y="110.00" width="1.70" height="3.75" fill="#dcfcd4" stroke="#3cc03c" stroke-width="0.35" />
<line x1="427.00" y1="95.00" x2="427.00" y2="117.50" stroke="#0c960c" stroke-width="0.9" />
<rect x="426.15" y="100.59" width="1.70" height="13.48" fill="#0e640e" stroke="#20a020" stroke-width="0.4" />
<line x1="429.50" y1="95.68" x2="429.50" y2="122.04" stroke="#16a016" stroke-width="0.8" />
<rect x="428.65" y="97.50" width="1.70" height="22.50" fill="#dcfcd4" stroke="#3cc03c" stroke-width="0.35" />
<line x1="432.50" y1="115.66" x2="432.50" y2="152.56" stroke="#16a016" stroke-width="0.8" />
<rect x="431.65" y="118.75" width="1.70" height="31.25" fill="#dcfcd4" stroke="#3cc03c" stroke-width="0.35" />
<line x1="435.00" y1="140.00" x2="435.00" y2="155.00" stroke="#0c960c" stroke-width="0.9" />
<rect x="434.15" y="143.46" width="1.70" height="7.70" fill="#0e640e" stroke="#20a020" stroke-width="0.4" />
<line x1="437.50" y1="115.00" x2="437.50" y2="150.00" stroke="#0c960c" stroke-width="0.9" />
<rect x="436.65" y="121.68" width="1.70" height="19.13" fill="#0e640e" stroke="#20a020" stroke-width="0.4" />
<line x1="440.50" y1="102.50" x2="440.50" y2="132.50" stroke="#0c960c" stroke-width="0.9" />
<rect x="439.65" y="110.99" width="1.70" height="17.44" fill="#0e640e" stroke="#20a020" stroke-width="0.4" />
<line x1="443.50" y1="107.20" x2="443.50" y2="122.17" stroke="#16a016" stroke-width="0.8" />
<rect x="442.65" y="111.00" width="1.70" height="8.00" fill="#dcfcd4" stroke="#3cc03c" stroke-width="0.35" />
<line x1="446.00" y1="105.00" x2="446.00" y2="137.50" stroke="#0c960c" stroke-width="0.9" />
<rect x="445.15" y="109.66" width="1.70" height="21.29" fill="#0e640e" stroke="#20a020" stroke-width="0.4" />
<line x1="448.50" y1="90.00" x2="448.50" y2="117.50" stroke="#0c960c" stroke-width="0.9" />
<rect x="447.65" y="96.40" width="1.70" height="13.30" fill="#0e640e" stroke="#20a020" stroke-width="0.4" />
<line x1="451.00" y1="80.00" x2="451.00" y2="105.00" stroke="#0c960c" stroke-width="0.9" />
<rect x="450.15" y="84.70" width="1.70" height="14.74" fill="#0e640e" stroke="#20a020" stroke-width="0.4" />
<line x1="454.00" y1="83.86" x2="454.00" y2="114.39" stroke="#16a016" stroke-width="0.8" />
<rect x="453.15" y="87.50" width="1.70" height="23.50" fill="#dcfcd4" stroke="#3cc03c" stroke-width="0.35" />
<line x1="456.50" y1="107.17" x2="456.50" y2="141.14" stroke="#16a016" stroke-width="0.8" />
<rect x="455.65" y="111.00" width="1.70" height="27.75" fill="#dcfcd4" stroke="#3cc03c" stroke-width="0.35" />
<line x1="459.00" y1="80.00" x2="459.00" y2="125.00" stroke="#0c960c" stroke-width="0.9" />
<rect x="458.15" y="90.68" width="1.70" height="27.26" fill="#0e640e" stroke="#20a020" stroke-width="0.4" />
<line x1="462.25" y1="76.83" x2="462.25" y2="105.96" stroke="#16a016" stroke-width="0.8" />
<rect x="461.40" y="80.00" width="1.70" height="22.50" fill="#dcfcd4" stroke="#3cc03c" stroke-width="0.35" />
<line x1="464.75" y1="98.08" x2="464.75" y2="114.15" stroke="#16a016" stroke-width="0.8" />
<rect x="463.90" y="101.00" width="1.70" height="10.00" fill="#dcfcd4" stroke="#3cc03c" stroke-width="0.35" />
<line x1="467.25" y1="108.36" x2="467.25" y2="129.95" stroke="#16a016" stroke-width="0.8" />
<rect x="466.40" y="110.00" width="1.70" height="16.25" fill="#dcfcd4" stroke="#3cc03c" stroke-width="0.35" />
<line x1="469.75" y1="92.50" x2="469.75" y2="132.50" stroke="#0c960c" stroke-width="0.9" />
<rect x="468.90" y="104.36" width="1.70" height="16.30" fill="#0e640e" stroke="#20a020" stroke-width="0.4" />
<line x1="472.75" y1="68.75" x2="472.75" y2="97.50" stroke="#0c960c" stroke-width="0.9" />
<rect x="471.90" y="74.98" width="1.70" height="14.98" fill="#0e640e" stroke="#20a020" stroke-width="0.4" />
<line x1="475.25" y1="87.50" x2="475.25" y2="102.50" stroke="#0c960c" stroke-width="0.9" />
<rect x="474.40" y="90.17" width="1.70" height="8.08" fill="#0e640e" stroke="#20a020" stroke-width="0.4" />
<line x1="478.00" y1="86.43" x2="478.00" y2="102.05" stroke="#16a016" stroke-width="0.8" />
<rect x="477.15" y="90.00" width="1.70" height="10.00" fill="#dcfcd4" stroke="#3cc03c" stroke-width="0.35" />
<line x1="481.00" y1="97.50" x2="481.00" y2="119.82" stroke="#16a016" stroke-width="0.8" />
<rect x="480.15" y="98.75" width="1.70" height="18.75" fill="#dcfcd4" stroke="#3cc03c" stroke-width="0.35" />
<line x1="483.50" y1="100.00" x2="483.50" y2="112.50" stroke="#0c960c" stroke-width="0.9" />
<rect x="482.65" y="102.74" width="1.70" height="6.53" fill="#0e640e" stroke="#20a020" stroke-width="0.4" />
<line x1="486.00" y1="101.29" x2="486.00" y2="111.09" stroke="#16a016" stroke-width="0.8" />
<rect x="485.15" y="103.75" width="1.70" height="6.25" fill="#dcfcd4" stroke="#3cc03c" stroke-width="0.35" />
<line x1="489.00" y1="100.00" x2="489.00" y2="115.00" stroke="#0c960c" stroke-width="0.9" />
<rect x="488.15" y="103.98" width="1.70" height="9.04" fill="#0e640e" stroke="#20a020" stroke-width="0.4" />
<line x1="491.50" y1="98.75" x2="491.50" y2="105.00" stroke="#0c960c" stroke-width="0.9" />
<rect x="490.65" y="100.40" width="1.70" height="3.66" fill="#0e640e" stroke="#20a020" stroke-width="0.4" />
<line x1="494.00" y1="83.99" x2="494.00" y2="93.36" stroke="#16a016" stroke-width="0.8" />
<rect x="493.15" y="86.00" width="1.70" height="4.00" fill="#dcfcd4" stroke="#3cc03c" stroke-width="0.35" />
<line x1="496.50" y1="82.50" x2="496.50" y2="97.50" stroke="#0c960c" stroke-width="0.9" />
<rect x="495.65" y="84.68" width="1.70" height="10.62" fill="#0e640e" stroke="#20a020" stroke-width="0.4" />
<line x1="499.00" y1="81.20" x2="499.00" y2="94.42" stroke="#16a016" stroke-width="0.8" />
<rect x="498.15" y="83.75" width="1.70" height="7.50" fill="#dcfcd4" stroke="#3cc03c" stroke-width="0.35" />
<line x1="502.25" y1="87.73" x2="502.25" y2="100.57" stroke="#16a016" stroke-width="0.8" />
<rect x="501.40" y="91.25" width="1.70" height="6.25" fill="#dcfcd4" stroke="#3cc03c" stroke-width="0.35" />
<line x1="504.75" y1="115.00" x2="504.75" y2="127.50" stroke="#0c960c" stroke-width="0.9" />
<rect x="503.90" y="118.63" width="1.70" height="6.26" fill="#0e640e" stroke="#20a020" stroke-width="0.4" />
<line x1="507.75" y1="101.00" x2="507.75" y2="120.00" stroke="#0c960c" stroke-width="0.9" />
<rect x="506.90" y="106.53" width="1.70" height="10.90" fill="#0e640e" stroke="#20a020" stroke-width="0.4" />
<path d="M67.0,287.0 C68.0,286.7 71.0,284.5 73.0,285.0 C75.0,285.5 76.7,287.7 79.0,290.0 C81.3,292.3 84.8,298.7 87.0,299.0 C89.2,299.3 90.0,293.1 92.0,292.0 C94.0,290.9 96.3,292.7 99.0,292.5 C101.7,292.3 105.2,291.8 108.0,291.0 C110.8,290.2 113.3,288.3 116.0,288.0 C118.7,287.7 121.9,288.3 124.0,289.0 C126.1,289.7 127.2,292.5 128.5,292.0 C129.8,291.5 130.9,291.0 132.0,286.0 C133.1,281.0 133.8,269.3 135.0,262.0 C136.2,254.7 137.9,249.7 139.5,242.0 C141.1,234.3 143.1,224.8 144.8,216.0 C146.5,207.2 148.2,195.3 149.7,189.0 C151.1,182.7 151.6,181.4 153.5,178.4 C155.4,175.4 159.0,171.2 161.0,171.0 C163.0,170.8 162.3,174.4 165.6,177.5 C168.9,180.6 177.6,187.7 180.7,189.7 C183.8,191.7 182.5,190.8 184.4,189.7 C186.3,188.6 189.3,183.3 192.0,183.0 C194.7,182.7 198.2,187.5 200.4,187.8 C202.6,188.1 203.4,185.2 205.0,184.6 C206.6,184.0 207.0,184.7 210.0,184.0 C213.0,183.3 220.0,179.8 222.9,180.3 C225.8,180.8 224.9,187.8 227.6,187.0 C230.2,186.2 235.7,177.7 238.8,175.6 C241.9,173.5 244.0,176.6 246.3,174.7 C248.7,172.8 250.2,166.3 252.9,164.4 C255.6,162.5 259.8,164.1 262.3,163.5 C264.8,162.9 265.2,161.2 268.0,160.6 C270.8,160.0 276.2,160.9 279.2,159.7 C282.2,158.4 284.2,155.9 286.0,153.1 C287.8,150.3 288.2,147.7 290.0,143.0 C291.8,138.3 295.1,129.0 297.0,125.0 C298.9,121.0 299.5,121.2 301.5,118.8 C303.5,116.2 306.5,111.2 309.0,110.0 C311.5,108.8 313.2,112.7 316.5,111.2 C319.8,109.8 325.5,101.5 329.0,101.2 C332.5,101.0 335.0,105.6 337.8,110.0 C340.5,114.4 342.8,119.6 345.2,127.5 C347.8,135.4 350.5,154.8 352.8,157.5 C355.0,160.2 357.0,146.3 359.0,143.8 C361.0,141.2 363.2,144.6 365.0,142.0 C366.8,139.4 368.1,133.6 370.0,128.3 C371.9,123.0 374.2,116.4 376.7,110.0 C379.2,103.6 382.4,95.8 385.0,90.0 C387.6,84.2 390.0,78.5 392.5,75.0 C395.0,71.5 397.5,70.0 400.0,68.8 C402.5,67.5 404.6,67.5 407.5,67.5 C410.4,67.5 414.2,68.3 417.5,68.8 C420.8,69.2 424.6,70.8 427.5,70.0 C430.4,69.2 432.9,63.8 435.0,63.8 C437.1,63.8 438.4,65.6 440.0,70.0 C441.6,74.4 442.9,87.9 444.8,90.0 C446.6,92.1 448.5,85.0 451.0,82.5 C453.5,80.0 456.4,76.0 459.8,75.0 C463.1,74.0 467.5,76.5 471.0,76.2 C474.5,76.0 477.7,73.5 481.0,73.8 C484.3,74.0 488.1,76.7 491.0,77.5 C493.9,78.3 495.8,78.3 498.5,78.8 C501.2,79.2 505.8,79.8 507.2,80.0" fill="none" stroke="#285a8c" stroke-width="1.0"/>
<path d="M68.4,341.8 C69.8,339.4 74.1,331.7 77.0,327.5 C79.9,323.3 82.7,319.7 86.0,316.6 C89.3,313.5 93.5,309.9 96.8,309.0 C100.1,308.1 102.3,310.7 105.6,311.0 C108.9,311.3 112.8,311.2 116.5,311.0 C120.2,310.8 124.4,311.8 127.5,310.0 C130.6,308.2 131.7,305.8 135.0,300.0 C138.3,294.2 143.8,283.3 147.5,275.0 C151.2,266.7 154.4,258.3 157.5,250.0 C160.6,241.7 163.7,230.8 166.2,225.0 C168.8,219.2 170.0,217.9 173.0,215.0 C176.0,212.1 181.6,208.1 184.4,207.5 C187.2,206.9 187.5,210.2 190.0,211.3 C192.5,212.4 196.3,213.8 199.4,214.0 C202.5,214.2 205.8,212.6 208.8,212.2 C211.8,211.8 214.0,212.6 217.3,211.3 C220.6,210.1 224.1,207.2 228.5,204.7 C232.9,202.2 239.1,199.1 243.5,196.3 C247.9,193.5 250.7,190.6 254.8,187.8 C258.9,185.0 264.6,181.1 268.0,179.4 C271.4,177.7 272.7,178.7 275.4,177.5 C278.1,176.3 280.1,174.7 284.0,172.0 C287.9,169.3 293.6,166.6 299.0,161.2 C304.4,155.9 312.3,142.9 316.5,140.0 C320.7,137.1 319.8,140.0 324.0,143.8 C328.2,147.5 336.7,157.7 341.5,162.5 C346.3,167.3 349.7,171.5 352.8,172.5 C355.8,173.5 357.1,170.9 360.0,168.3 C362.9,165.7 366.7,161.1 370.0,156.7 C373.3,152.3 376.7,146.7 380.0,141.7 C383.3,136.7 386.7,131.7 390.0,126.7 C393.3,121.7 396.9,116.2 400.0,111.7 C403.1,107.2 405.0,101.7 408.3,100.0 C411.6,98.3 416.8,101.1 420.0,101.7 C423.2,102.3 424.8,101.9 427.5,103.8 C430.2,105.6 433.1,110.5 436.0,113.0 C438.9,115.5 441.8,118.8 444.8,118.8 C447.7,118.7 450.4,113.6 453.5,112.5 C456.6,111.4 460.8,112.1 463.5,112.0 C466.2,111.9 467.9,112.9 470.0,112.0 C472.1,111.1 473.5,107.9 476.3,106.7 C479.1,105.5 483.2,105.5 486.7,104.6 C490.2,103.7 494.2,102.4 497.1,101.5 C500.1,100.6 502.7,99.5 504.4,99.4 C506.1,99.3 507.0,100.7 507.5,101.0" fill="none" stroke="#285a8c" stroke-width="1.0"/>
<path d="M81.5,345.0 C82.2,342.6 84.3,334.3 86.0,330.8 C87.7,327.3 89.1,325.3 91.4,324.0 C93.7,322.7 97.8,322.2 100.0,323.0 C102.2,323.8 102.1,327.7 104.5,328.6 C106.9,329.5 111.7,327.5 114.3,328.6 C116.9,329.7 117.8,333.7 120.0,335.0 C122.2,336.3 125.6,335.0 127.5,336.2 C129.4,337.5 130.4,341.0 131.2,342.5 C132.1,344.0 132.3,344.6 132.5,345.0" fill="none" stroke="#285a8c" stroke-width="1.0"/>
<path d="M151.5,345.0 C152.9,337.5 156.9,314.6 160.0,300.0 C163.1,285.4 167.5,267.6 170.0,257.5 C172.5,247.4 173.2,244.5 175.0,239.4 C176.8,234.3 179.1,229.7 180.7,227.2 C182.3,224.7 183.3,223.6 184.4,224.4 C185.5,225.2 186.1,229.1 187.2,231.9 C188.3,234.7 189.3,239.9 191.0,241.3 C192.7,242.7 194.3,240.6 197.5,240.4 C200.7,240.2 205.9,240.5 210.0,240.4 C214.1,240.3 219.7,241.6 222.2,239.9 C224.7,238.2 223.8,233.1 224.8,230.0 C225.9,226.9 226.2,223.3 228.5,221.6 C230.8,219.9 235.4,221.4 238.8,219.7 C242.2,218.0 245.9,213.6 249.2,211.3 C252.5,209.0 256.3,208.2 258.5,205.7 C260.7,203.2 260.7,199.0 262.3,196.3 C263.9,193.6 266.4,190.3 268.0,189.7 C269.6,189.1 269.8,191.7 271.7,192.5 C273.6,193.3 277.1,194.6 279.2,194.4 C281.2,194.2 280.7,190.5 284.0,191.2 C287.3,192.0 294.8,199.8 299.0,198.8 C303.2,197.7 306.1,190.2 309.0,185.0 C311.9,179.8 314.4,167.9 316.5,167.5 C318.6,167.1 318.6,177.5 321.5,182.5 C324.4,187.5 330.2,193.3 334.0,197.5 C337.8,201.7 341.3,207.5 344.0,207.5 C346.7,207.5 348.2,200.6 350.2,197.5 C352.3,194.4 354.2,190.0 356.5,188.8 C358.8,187.5 359.2,191.5 364.0,190.0 C368.8,188.5 380.4,183.3 385.0,180.0 C389.6,176.7 388.9,175.8 391.7,170.0 C394.5,164.2 398.6,151.4 401.7,145.0 C404.8,138.6 406.9,134.2 410.0,131.7 C413.1,129.2 416.7,128.2 420.0,130.0 C423.3,131.8 427.3,139.2 430.0,142.5 C432.7,145.8 433.8,149.2 436.0,150.0 C438.2,150.8 440.2,147.1 443.5,147.5 C446.8,147.9 452.2,151.5 456.0,152.5 C459.8,153.5 463.3,156.2 466.0,153.8 C468.7,151.2 469.3,140.6 472.2,137.5 C475.2,134.4 479.5,136.9 483.5,135.0 C487.5,133.1 492.0,129.0 496.0,126.2 C500.0,123.5 505.4,120.0 507.2,118.8" fill="none" stroke="#285a8c" stroke-width="1.0"/>
<path d="M162.5,343.0 C166.0,340.8 174.2,336.3 183.8,330.0 C193.3,323.7 207.0,314.4 220.0,305.0 C233.0,295.6 250.3,282.3 261.6,273.8 C272.9,265.3 279.0,261.3 288.0,254.0 C297.0,246.7 307.9,235.9 315.4,230.0 C322.9,224.1 324.6,223.1 332.8,218.8 C340.9,214.4 354.8,210.0 364.0,203.8 C373.2,197.5 381.1,187.0 388.2,181.4 C395.3,175.8 398.5,173.8 406.5,170.4 C414.5,167.0 427.8,164.4 436.0,161.2 C444.2,158.1 449.3,154.2 456.0,151.2 C462.7,148.3 469.3,146.2 476.0,143.8 C482.7,141.2 490.7,137.9 496.0,136.2 C501.3,134.6 505.8,134.2 507.8,133.8" fill="none" stroke="#ffd200" stroke-width="1.7"/>
<circle cx="503.3" cy="126.5" r="1.5" fill="#8080ff" stroke="#ffffff" stroke-width="0.5"/>
<rect x="184.00" y="274.00" width="299.80" height="60.30" fill="#f0f0f0" stroke="#e4e4e4" stroke-width="0.8" />
<text x="186" y="282.4" font-size="5.9" fill="#3a3a3a" text-anchor="start" font-weight="normal" style="font-family:&quot;Liberation Sans&quot;" textLength="57.8" lengthAdjust="spacingAndGlyphs"  stroke="#3a3a3a" stroke-width="0.15">EASY BACKTEST  GBPUSD,M60</text>
<line x1="471.50" y1="281.20" x2="476.00" y2="281.20" stroke="#777" stroke-width="0.8" />
<text x="479.8" y="282" font-size="6.5" fill="#888" text-anchor="middle" font-weight="normal" style="font-family:&quot;Liberation Sans&quot;"  stroke="#888" stroke-width="0.15">x</text>
<rect x="185.25" y="285.60" width="33.15" height="22.90" fill="#08780c" stroke="#555" stroke-width="0.7" />
<text x="193.9" y="301.7" font-size="12.5" fill="#eef8e8" text-anchor="start" font-weight="normal" style="font-family:&quot;Liberation Serif&quot;" textLength="15.599999999999994" lengthAdjust="spacingAndGlyphs"  stroke="#eef8e8" stroke-width="0.15">Buy</text>
<rect x="209.00" y="285.90" width="9.20" height="8.50" fill="#fbfbfb" stroke="#777" stroke-width="0.5" />
<text x="211" y="292.9" font-size="6.3" fill="#444" text-anchor="start" font-weight="normal" style="font-family:&quot;Liberation Serif&quot;" textLength="6" lengthAdjust="spacingAndGlyphs"  stroke="#444" stroke-width="0.15">0.5</text>
<rect x="218.90" y="285.90" width="16.10" height="10.60" fill="#f4f4f4" stroke="#6e6e6e" stroke-width="0.7" />
<text x="219.5" y="293.4" font-size="5.5" fill="#333" text-anchor="start" font-weight="normal" style="font-family:&quot;Liberation Serif&quot;" textLength="14.0" lengthAdjust="spacingAndGlyphs"  stroke="#333" stroke-width="0.15">Buy Limit</text>
<rect x="236.10" y="285.90" width="5.20" height="10.60" fill="#f4f4f4" stroke="#6e6e6e" stroke-width="0.7" />
<text x="238.7" y="293" font-size="5" fill="#333" text-anchor="middle" font-weight="normal" style="font-family:&quot;Liberation Sans&quot;"  stroke="#333" stroke-width="0.15">+</text>
<rect x="242.30" y="285.90" width="15.90" height="10.60" fill="#f4f4f4" stroke="#6e6e6e" stroke-width="0.7" />
<text x="243.5" y="293.4" font-size="5.5" fill="#333" text-anchor="start" font-weight="normal" style="font-family:&quot;Liberation Serif&quot;" textLength="13.5" lengthAdjust="spacingAndGlyphs"  stroke="#333" stroke-width="0.15">Sell Limit</text>
<rect x="218.90" y="297.50" width="16.10" height="10.70" fill="#f4f4f4" stroke="#6e6e6e" stroke-width="0.7" />
<text x="219.5" y="304.6" font-size="5.5" fill="#333" text-anchor="start" font-weight="normal" style="font-family:&quot;Liberation Serif&quot;" textLength="14.0" lengthAdjust="spacingAndGlyphs"  stroke="#333" stroke-width="0.15">Buy Limit</text>
<rect x="236.10" y="297.50" width="5.20" height="10.70" fill="#f4f4f4" stroke="#6e6e6e" stroke-width="0.7" />
<text x="238.7" y="304.3" font-size="5.5" fill="#333" text-anchor="middle" font-weight="normal" style="font-family:&quot;Liberation Sans&quot;"  stroke="#333" stroke-width="0.15">-</text>
<rect x="242.30" y="297.50" width="15.90" height="10.70" fill="#f4f4f4" stroke="#6e6e6e" stroke-width="0.7" />
<text x="244.5" y="304.6" font-size="5.5" fill="#333" text-anchor="start" font-weight="normal" style="font-family:&quot;Liberation Serif&quot;" textLength="12.0" lengthAdjust="spacingAndGlyphs"  stroke="#333" stroke-width="0.15">Sell Stop</text>
<rect x="259.00" y="285.90" width="32.80" height="22.60" fill="#d65f5c" stroke="#555" stroke-width="0.7" />
<text x="267.9" y="301.7" font-size="12.5" fill="#fcecec" text-anchor="start" font-weight="normal" style="font-family:&quot;Liberation Serif&quot;" textLength="14.5" lengthAdjust="spacingAndGlyphs"  stroke="#fcecec" stroke-width="0.15">Sell</text>
<rect x="259.00" y="285.90" width="9.20" height="8.50" fill="#fbfbfb" stroke="#777" stroke-width="0.5" />
<text x="259.8" y="292.9" font-size="6" fill="#444" text-anchor="start" font-weight="normal" style="font-family:&quot;Liberation Serif&quot;" textLength="7.699999999999989" lengthAdjust="spacingAndGlyphs"  stroke="#444" stroke-width="0.15">0.01</text>
<rect x="185.25" y="309.80" width="33.15" height="10.20" fill="#f4f4f4" stroke="#6e6e6e" stroke-width="0.7" />
<text x="197" y="317.9" font-size="8" fill="#222" text-anchor="start" font-weight="normal" style="font-family:&quot;Liberation Serif&quot;" textLength="8.400000000000006" lengthAdjust="spacingAndGlyphs"  stroke="#222" stroke-width="0.15">TP+</text>
<rect x="185.25" y="321.50" width="33.15" height="10.60" fill="#f4f4f4" stroke="#6e6e6e" stroke-width="0.7" />
<text x="197" y="329.3" font-size="8" fill="#222" text-anchor="start" font-weight="normal" style="font-family:&quot;Liberation Serif&quot;" textLength="8.400000000000006" lengthAdjust="spacingAndGlyphs"  stroke="#222" stroke-width="0.15">TP-</text>
<rect x="208.50" y="315.25" width="9.90" height="11.45" fill="#fbfbfb" stroke="#666" stroke-width="0.6" />
<text x="210.5" y="324.1" font-size="7.5" fill="#333" text-anchor="start" font-weight="normal" style="font-family:&quot;Liberation Serif&quot;" textLength="5.5" lengthAdjust="spacingAndGlyphs"  stroke="#333" stroke-width="0.15">20</text>
<rect x="218.90" y="309.50" width="19.30" height="11.00" fill="#f4f4f4" stroke="#6e6e6e" stroke-width="0.7" />
<text x="219.4" y="316.8" font-size="6.2" fill="#222" text-anchor="start" font-weight="normal" style="font-family:&quot;Liberation Serif&quot;" textLength="18.19999999999999" lengthAdjust="spacingAndGlyphs"  stroke="#222" stroke-width="0.15">Close first</text>
<rect x="238.70" y="309.50" width="19.80" height="11.00" fill="#f4f4f4" stroke="#6e6e6e" stroke-width="0.7" />
<text x="239.5" y="316.8" font-size="6.2" fill="#222" text-anchor="start" font-weight="normal" style="font-family:&quot;Liberation Serif&quot;" textLength="17.899999999999977" lengthAdjust="spacingAndGlyphs"  stroke="#222" stroke-width="0.15">Close last</text>
<rect x="218.90" y="321.00" width="39.60" height="11.00" fill="#f4f4f4" stroke="#6e6e6e" stroke-width="0.7" />
<text x="228.8" y="329.8" font-size="8.7" fill="#222" text-anchor="start" font-weight="normal" style="font-family:&quot;Liberation Serif&quot;" textLength="18.69999999999999" lengthAdjust="spacingAndGlyphs"  stroke="#222" stroke-width="0.15">Close all</text>
<rect x="259.00" y="309.80" width="32.80" height="10.20" fill="#f4f4f4" stroke="#6e6e6e" stroke-width="0.7" />
<text x="270.5" y="317.9" font-size="8" fill="#222" text-anchor="start" font-weight="normal" style="font-family:&quot;Liberation Serif&quot;" textLength="7.800000000000011" lengthAdjust="spacingAndGlyphs"  stroke="#222" stroke-width="0.15">SL+</text>
<rect x="259.00" y="321.50" width="32.80" height="10.60" fill="#f4f4f4" stroke="#6e6e6e" stroke-width="0.7" />
<text x="271" y="329.3" font-size="8" fill="#222" text-anchor="start" font-weight="normal" style="font-family:&quot;Liberation Serif&quot;" textLength="7.300000000000011" lengthAdjust="spacingAndGlyphs"  stroke="#222" stroke-width="0.15">SL-</text>
<rect x="259.00" y="315.25" width="9.40" height="11.45" fill="#fbfbfb" stroke="#666" stroke-width="0.6" />
<text x="261" y="324.1" font-size="7.5" fill="#333" text-anchor="start" font-weight="normal" style="font-family:&quot;Liberation Serif&quot;" textLength="5.5" lengthAdjust="spacingAndGlyphs"  stroke="#333" stroke-width="0.15">10</text>
<rect x="282.10" y="315.25" width="9.70" height="11.45" fill="#1f8ff0" stroke="#1460b0" stroke-width="0.5" />
<text x="283.5" y="322.8" font-size="5" fill="#e0f0ff" text-anchor="start" font-weight="normal" style="font-family:&quot;Liberation Sans&quot;" textLength="7.0" lengthAdjust="spacingAndGlyphs"  stroke="#e0f0ff" stroke-width="0.15">BEY</text>
<rect x="292.60" y="286.00" width="189.40" height="13.00" fill="#d9d9d9" />
<rect x="292.60" y="299.00" width="189.40" height="35.00" fill="#f7f7f7" />
<text x="299.8" y="294.6" font-size="6.3" fill="#333" text-anchor="start" font-weight="normal" style="font-family:&quot;Liberation Sans&quot;" textLength="45.69999999999999" lengthAdjust="spacingAndGlyphs"  stroke="#333" stroke-width="0.15">Balance: 10000.00 USD</text>
<text x="359.6" y="294.6" font-size="6.3" fill="#333" text-anchor="start" font-weight="normal" style="font-family:&quot;Liberation Sans&quot;" textLength="42.39999999999998" lengthAdjust="spacingAndGlyphs"  stroke="#333" stroke-width="0.15">Equity: 10068.00 USD</text>
<text x="417.5" y="294.6" font-size="6.3" fill="#333" text-anchor="start" font-weight="normal" style="font-family:&quot;Liberation Sans&quot;" textLength="50.19999999999999" lengthAdjust="spacingAndGlyphs"  stroke="#333" stroke-width="0.15">FreeMargin: 9385.74 USD</text>
<text x="299.8" y="307.9" font-size="6" fill="#222" text-anchor="start" font-weight="normal" style="font-family:&quot;Liberation Sans&quot;" textLength="34.89999999999998" lengthAdjust="spacingAndGlyphs"  stroke="#222" stroke-width="0.15">Total Open Orders</text>
<text x="363.4" y="307.9" font-size="6" fill="#222" text-anchor="start" font-weight="normal" style="font-family:&quot;Liberation Sans&quot;" textLength="30.100000000000023" lengthAdjust="spacingAndGlyphs"  stroke="#222" stroke-width="0.15">Total Open Lots</text>
<text x="429.5" y="307.9" font-size="6" fill="#222" text-anchor="start" font-weight="normal" style="font-family:&quot;Liberation Sans&quot;" textLength="20.69999999999999" lengthAdjust="spacingAndGlyphs"  stroke="#222" stroke-width="0.15">Total Profit</text>
<text x="313.6" y="323.2" font-size="8.5" fill="#111" text-anchor="start" font-weight="normal" style="font-family:&quot;Liberation Sans&quot;" textLength="3.3999999999999773" lengthAdjust="spacingAndGlyphs"  stroke="#111" stroke-width="0.15">1</text>
<text x="372.5" y="323.2" font-size="8.5" fill="#111" text-anchor="start" font-weight="normal" style="font-family:&quot;Liberation Sans&quot;" textLength="12.899999999999977" lengthAdjust="spacingAndGlyphs"  stroke="#111" stroke-width="0.15">0.50</text>
<text x="427.8" y="323.2" font-size="8.5" fill="#111" text-anchor="start" font-weight="normal" style="font-family:&quot;Liberation Sans&quot;" textLength="29.19999999999999" lengthAdjust="spacingAndGlyphs"  stroke="#111" stroke-width="0.15">69.50 USD</text>
<rect x="65.00" y="352.50" width="575.00" height="11.00" fill="#f0f0f0" />
<line x1="65.00" y1="352.50" x2="640.00" y2="352.50" stroke="#dadada" stroke-width="0.8" />
<rect x="67.50" y="353.50" width="28.00" height="9.00" fill="#f0f0f0" stroke="#cfcfcf" stroke-width="0.6" />
<text x="71.0" y="360.5" font-size="6" fill="#888" text-anchor="start" font-weight="normal" style="font-family:&quot;Liberation Sans&quot;" textLength="21.5" lengthAdjust="spacingAndGlyphs"  stroke="#888" stroke-width="0.15">GBPUSD,H1</text>
<rect x="96.00" y="353.50" width="43.00" height="9.50" fill="#ffffff" stroke="#555" stroke-width="0.7" />
<text x="99.0" y="360.5" font-size="6" fill="#222" text-anchor="start" font-weight="normal" style="font-family:&quot;Liberation Sans&quot;" textLength="37" lengthAdjust="spacingAndGlyphs"  stroke="#222" stroke-width="0.15">GBPUSD,M15 (visual)</text>
<text x="630.5" y="359.5" font-size="6" fill="#777" text-anchor="middle" font-weight="normal" style="font-family:&quot;Liberation Sans&quot;"  stroke="#777" stroke-width="0.15">‹</text>
<text x="636" y="359.5" font-size="6" fill="#777" text-anchor="middle" font-weight="normal" style="font-family:&quot;Liberation Sans&quot;"  stroke="#777" stroke-width="0.15">›</text>
<rect x="0.00" y="364.00" width="640.00" height="104.00" fill="#f0f0f0" />
<line x1="0.00" y1="364.50" x2="640.00" y2="364.50" stroke="#d0d0d0" stroke-width="0.8" />
<rect x="0.00" y="365.00" width="5.50" height="103.00" fill="#dde6ef" />
<text x="2.7" y="370.5" font-size="5.5" fill="#222" text-anchor="middle" font-weight="bold" style="font-family:&quot;Liberation Sans&quot;"  stroke="#222" stroke-width="0.15">x</text>
<text x="0" y="0" font-size="5" fill="#333" transform="translate(4.2,466) rotate(-90)" style="font-family:&quot;Liberation Sans&quot;" font-weight="bold" textLength="12" lengthAdjust="spacingAndGlyphs">Tester</text>
<rect x="5.50" y="366.00" width="634.50" height="90.50" fill="#ffffff" />
<rect x="8.00" y="370.00" width="39.00" height="10.00" fill="#cccccc" stroke="#c4c4c4" stroke-width="0.5" />
<text x="9.5" y="377.5" font-size="5.8" fill="#666" text-anchor="start" font-weight="normal" style="font-family:&quot;Liberation Sans&quot;" textLength="22.5" lengthAdjust="spacingAndGlyphs"  stroke="#666" stroke-width="0.15">Expert Advisor</text>
<text x="44" y="377.5" font-size="5" fill="#888" text-anchor="middle" font-weight="normal" style="font-family:&quot;Liberation Sans&quot;"  stroke="#888" stroke-width="0.15">⌄</text>
<rect x="50.00" y="370.00" width="533.00" height="10.00" fill="#f2f2f2" stroke="#d8d8d8" stroke-width="0.6" />
<text x="51.5" y="377.5" font-size="5.8" fill="#666" text-anchor="start" font-weight="normal" style="font-family:&quot;Liberation Sans&quot;" textLength="36" lengthAdjust="spacingAndGlyphs"  stroke="#666" stroke-width="0.15">EASY BACKTEST.ex4</text>
<text x="580" y="377" font-size="6" fill="#888" text-anchor="middle" font-weight="normal" style="font-family:&quot;Liberation Sans&quot;"  stroke="#888" stroke-width="0.15">⌄</text>
<text x="36.0" y="390.5" font-size="5.8" fill="#666" text-anchor="start" font-weight="normal" style="font-family:&quot;Liberation Sans&quot;" textLength="11.5" lengthAdjust="spacingAndGlyphs"  stroke="#666" stroke-width="0.15">Symbol:</text>
<rect x="50.00" y="383.00" width="449.00" height="10.00" fill="#cccccc" />
<text x="51.5" y="390.5" font-size="5.8" fill="#6a6a6a" text-anchor="start" font-weight="normal" style="font-family:&quot;Liberation Sans&quot;" textLength="68" lengthAdjust="spacingAndGlyphs"  stroke="#6a6a6a" stroke-width="0.15">GBPUSD, Great Britain Pound vs US Dollar</text>
<text x="495" y="390" font-size="6" fill="#999" text-anchor="middle" font-weight="normal" style="font-family:&quot;Liberation Sans&quot;"  stroke="#999" stroke-width="0.15">⌄</text>
<text x="37.0" y="404.5" font-size="5.8" fill="#666" text-anchor="start" font-weight="normal" style="font-family:&quot;Liberation Sans&quot;" textLength="10.5" lengthAdjust="spacingAndGlyphs"  stroke="#666" stroke-width="0.15">Model:</text>
<rect x="50.00" y="397.00" width="449.00" height="10.00" fill="#cccccc" />
<text x="51.5" y="404.5" font-size="5.8" fill="#6a6a6a" text-anchor="start" font-weight="normal" style="font-family:&quot;Liberation Sans&quot;" textLength="152.5" lengthAdjust="spacingAndGlyphs"  stroke="#6a6a6a" stroke-width="0.15">Every tick (the most precise method based on all available least timeframes to generate each tick)</text>
<text x="495" y="404" font-size="6" fill="#999" text-anchor="middle" font-weight="normal" style="font-family:&quot;Liberation Sans&quot;"  stroke="#999" stroke-width="0.15">⌄</text>
<text x="530" y="390.5" font-size="5.8" fill="#666" text-anchor="start" font-weight="normal" style="font-family:&quot;Liberation Sans&quot;" textLength="10" lengthAdjust="spacingAndGlyphs"  stroke="#666" stroke-width="0.15">Period:</text>
<rect x="543.00" y="383.00" width="40.00" height="10.00" fill="#cccccc" stroke="#c4c4c4" stroke-width="0.5" />
<text x="544.5" y="390.5" font-size="5.8" fill="#888" text-anchor="start" font-weight="normal" style="font-family:&quot;Liberation Sans&quot;" textLength="8" lengthAdjust="spacingAndGlyphs"  stroke="#888" stroke-width="0.15">M15</text>
<text x="580" y="390" font-size="6" fill="#999" text-anchor="middle" font-weight="normal" style="font-family:&quot;Liberation Sans&quot;"  stroke="#999" stroke-width="0.15">⌄</text>
<text x="528.75" y="404.5" font-size="5.8" fill="#666" text-anchor="start" font-weight="normal" style="font-family:&quot;Liberation Sans&quot;" textLength="11.25" lengthAdjust="spacingAndGlyphs"  stroke="#666" stroke-width="0.15">Spread:</text>
<rect x="543.00" y="397.00" width="40.00" height="10.00" fill="#f0f0f0" stroke="#d4d4d4" stroke-width="0.6" />
<text x="544.5" y="404.5" font-size="5.8" fill="#555" text-anchor="start" font-weight="normal" style="font-family:&quot;Liberation Sans&quot;" textLength="10.5" lengthAdjust="spacingAndGlyphs"  stroke="#555" stroke-width="0.15">Current</text>
<text x="580" y="404" font-size="6" fill="#999" text-anchor="middle" font-weight="normal" style="font-family:&quot;Liberation Sans&quot;"  stroke="#999" stroke-width="0.15">⌄</text>
<rect x="585.50" y="369.50" width="50.50" height="10.50" fill="#e1e1e1" stroke="#adadad" stroke-width="0.7" />
<text x="597.75" y="376.85" font-size="5.8" fill="#333" text-anchor="start" font-weight="normal" style="font-family:&quot;Liberation Sans&quot;" textLength="26" lengthAdjust="spacingAndGlyphs"  stroke="#333" stroke-width="0.15">Expert properties</text>
<rect x="585.50" y="383.25" width="50.50" height="10.50" fill="#e1e1e1" stroke="#adadad" stroke-width="0.7" />
<text x="597.0" y="390.6" font-size="5.8" fill="#333" text-anchor="start" font-weight="normal" style="font-family:&quot;Liberation Sans&quot;" textLength="27.5" lengthAdjust="spacingAndGlyphs"  stroke="#333" stroke-width="0.15">Symbol properties</text>
<rect x="585.50" y="397.00" width="50.50" height="10.50" fill="#e1e1e1" stroke="#adadad" stroke-width="0.7" />
<text x="602.0" y="404.35" font-size="5.8" fill="#333" text-anchor="start" font-weight="normal" style="font-family:&quot;Liberation Sans&quot;" textLength="17.5" lengthAdjust="spacingAndGlyphs"  stroke="#333" stroke-width="0.15">Open chart</text>
<rect x="585.50" y="410.75" width="50.50" height="10.50" fill="#e1e1e1" stroke="#adadad" stroke-width="0.7" />
<text x="600.25" y="418.1" font-size="5.8" fill="#666" text-anchor="start" font-weight="normal" style="font-family:&quot;Liberation Sans&quot;" textLength="21" lengthAdjust="spacingAndGlyphs"  stroke="#666" stroke-width="0.15">Modify expert</text>
<rect x="585.50" y="443.00" width="50.50" height="11.00" fill="#e1e1e1" stroke="#adadad" stroke-width="0.7" />
<text x="605.75" y="450.6" font-size="5.8" fill="#111" text-anchor="start" font-weight="bold" style="font-family:&quot;Liberation Sans&quot;" textLength="10" lengthAdjust="spacingAndGlyphs"  stroke="#111" stroke-width="0.15">Stop</text>
<text x="558.0" y="419" font-size="5.8" fill="#666" text-anchor="start" font-weight="normal" style="font-family:&quot;Liberation Sans&quot;" textLength="19.5" lengthAdjust="spacingAndGlyphs"  stroke="#666" stroke-width="0.15">Optimization</text>
<rect x="578.25" y="413.00" width="5.00" height="6.50" fill="#fff" stroke="#666" stroke-width="0.6" />
<text x="29.499999999999996" y="419" font-size="5.8" fill="#666" text-anchor="start" font-weight="normal" style="font-family:&quot;Liberation Sans&quot;" textLength="14.3" lengthAdjust="spacingAndGlyphs"  stroke="#666" stroke-width="0.15">Use date</text>
<rect x="45.00" y="413.00" width="6.00" height="6.50" fill="#fff" stroke="#666" stroke-width="0.6" />
<path d="M46.2,416 L47.6,418 L50,414" fill="none" stroke="#111" stroke-width="0.9"/>
<text x="24.999999999999996" y="433" font-size="5.8" fill="#666" text-anchor="start" font-weight="normal" style="font-family:&quot;Liberation Sans&quot;" textLength="18.8" lengthAdjust="spacingAndGlyphs"  stroke="#666" stroke-width="0.15">Visual mode</text>
<rect x="45.00" y="426.50" width="6.00" height="6.50" fill="#fff" stroke="#666" stroke-width="0.6" />
<path d="M46.2,429.5 L47.6,431.5 L50,427.5" fill="none" stroke="#111" stroke-width="0.9"/>
<text x="81.0" y="418.5" font-size="5.8" fill="#666" text-anchor="start" font-weight="normal" style="font-family:&quot;Liberation Sans&quot;" textLength="8.5" lengthAdjust="spacingAndGlyphs"  stroke="#666" stroke-width="0.15">From:</text>
<rect x="92.00" y="411.00" width="40.50" height="9.50" fill="#fff" stroke="#c8c8c8" stroke-width="0.6" />
<text x="93.5" y="418" font-size="5.6" fill="#888" text-anchor="start" font-weight="normal" style="font-family:&quot;Liberation Sans&quot;" textLength="17" lengthAdjust="spacingAndGlyphs"  stroke="#888" stroke-width="0.15">2021.01.01</text>
<rect x="123.00" y="412.50" width="3.00" height="5.00" fill="#e8e8e8" stroke="#bbb" stroke-width="0.4" />
<text x="129" y="418" font-size="4" fill="#999" text-anchor="start" font-weight="normal" style="font-family:&quot;Liberation Sans&quot;"  stroke="#999" stroke-width="0.15">▾</text>
<text x="169.5" y="418.5" font-size="5.8" fill="#666" text-anchor="start" font-weight="normal" style="font-family:&quot;Liberation Sans&quot;" textLength="6" lengthAdjust="spacingAndGlyphs"  stroke="#666" stroke-width="0.15">To:</text>
<rect x="177.00" y="411.00" width="40.00" height="9.50" fill="#fff" stroke="#c8c8c8" stroke-width="0.6" />
<text x="178.5" y="418" font-size="5.6" fill="#888" text-anchor="start" font-weight="normal" style="font-family:&quot;Liberation Sans&quot;" textLength="17" lengthAdjust="spacingAndGlyphs"  stroke="#888" stroke-width="0.15">2021.02.15</text>
<rect x="208.00" y="412.50" width="3.00" height="5.00" fill="#e8e8e8" stroke="#bbb" stroke-width="0.4" />
<text x="213" y="418" font-size="4" fill="#999" text-anchor="start" font-weight="normal" style="font-family:&quot;Liberation Sans&quot;"  stroke="#999" stroke-width="0.15">▾</text>
<rect x="54.50" y="428.00" width="55.00" height="4.00" fill="#fafafa" stroke="#b8b8b8" stroke-width="0.5" />
<rect x="75.00" y="425.50" width="2.20" height="8.50" fill="#f8f8f8" stroke="#999" stroke-width="0.5" />
<rect x="114.50" y="425.00" width="8.00" height="10.00" fill="#f4f4f4" stroke="#c0c0c0" stroke-width="0.6" />
<line x1="117.60" y1="427.50" x2="117.60" y2="432.50" stroke="#666" stroke-width="0.6" />
<line x1="119.40" y1="427.50" x2="119.40" y2="432.50" stroke="#666" stroke-width="0.6" />
<rect x="124.50" y="425.00" width="50.00" height="10.00" fill="#e4e4e4" stroke="#c4c4c4" stroke-width="0.6" />
<text x="143.25" y="432" font-size="5.8" fill="#222" text-anchor="start" font-weight="normal" style="font-family:&quot;Liberation Sans&quot;" textLength="12.5" lengthAdjust="spacingAndGlyphs"  stroke="#222" stroke-width="0.15">Skip to</text>
<rect x="177.00" y="425.00" width="40.00" height="10.00" fill="#fff" stroke="#9a9a9a" stroke-width="0.6" />
<text x="178.5" y="432.2" font-size="5.8" fill="#222" text-anchor="start" font-weight="normal" style="font-family:&quot;Liberation Sans&quot;" textLength="17.5" lengthAdjust="spacingAndGlyphs"  stroke="#222" stroke-width="0.15">2021.02.17</text>
<rect x="207.00" y="426.50" width="3.50" height="6.50" fill="#c8c8c8" stroke="#666" stroke-width="0.5" />
<text x="213" y="432" font-size="4.5" fill="#334" text-anchor="start" font-weight="normal" style="font-family:&quot;Liberation Sans&quot;"  stroke="#334" stroke-width="0.15">▾</text>
<rect x="8.00" y="444.00" width="575.00" height="9.00" fill="#e6e6e6" stroke="#d0d0d0" stroke-width="0.6" />
<rect x="8.00" y="444.00" width="143.00" height="9.00" fill="#06b025" />
<rect x="5.50" y="456.50" width="634.50" height="11.50" fill="#f0f0f0" />
<line x1="5.50" y1="457.30" x2="640.00" y2="457.30" stroke="#8a8a8a" stroke-width="1" />
<line x1="26.00" y1="466.20" x2="640.00" y2="466.20" stroke="#d4d4d4" stroke-width="0.8" />
<rect x="6.00" y="457.80" width="20.50" height="8.60" fill="#ffffff" />
<path d="M6.3,457.5 L6.3,466.3 L26.3,466.3 L26.3,457.5" fill="none" stroke="#555" stroke-width="0.8"/>
<text x="8.75" y="464.5" font-size="6" fill="#222" text-anchor="start" font-weight="normal" style="font-family:&quot;Liberation Sans&quot;" textLength="15" lengthAdjust="spacingAndGlyphs"  stroke="#222" stroke-width="0.15">Settings</text>
<text x="30" y="464.5" font-size="6" fill="#777" text-anchor="start" font-weight="normal" style="font-family:&quot;Liberation Sans&quot;" textLength="12" lengthAdjust="spacingAndGlyphs"  stroke="#777" stroke-width="0.15">Results</text>
<text x="49" y="464.5" font-size="6" fill="#777" text-anchor="start" font-weight="normal" style="font-family:&quot;Liberation Sans&quot;" textLength="11" lengthAdjust="spacingAndGlyphs"  stroke="#777" stroke-width="0.15">Graph</text>
<text x="66" y="464.5" font-size="6" fill="#777" text-anchor="start" font-weight="normal" style="font-family:&quot;Liberation Sans&quot;" textLength="12" lengthAdjust="spacingAndGlyphs"  stroke="#777" stroke-width="0.15">Report</text>
<text x="84.5" y="464.5" font-size="6" fill="#777" text-anchor="start" font-weight="normal" style="font-family:&quot;Liberation Sans&quot;" textLength="13" lengthAdjust="spacingAndGlyphs"  stroke="#777" stroke-width="0.15">Journal</text>
<line x1="45.75" y1="459.50" x2="45.75" y2="465.00" stroke="#aaa" stroke-width="0.6" />
<line x1="63.75" y1="459.50" x2="63.75" y2="465.00" stroke="#aaa" stroke-width="0.6" />
<line x1="81.25" y1="459.50" x2="81.25" y2="465.00" stroke="#aaa" stroke-width="0.6" />
<line x1="100.75" y1="459.50" x2="100.75" y2="465.00" stroke="#aaa" stroke-width="0.6" />
<rect x="0.00" y="468.00" width="640.00" height="12.00" fill="#f0f0f0" />
<line x1="0.00" y1="468.50" x2="640.00" y2="468.50" stroke="#d8d8d8" stroke-width="0.8" />
<text x="1" y="477.8" font-size="5.8" fill="#222" text-anchor="start" font-weight="normal" style="font-family:&quot;Liberation Sans&quot;" textLength="30" lengthAdjust="spacingAndGlyphs"  stroke="#222" stroke-width="0.15">For Help, press F1</text>
<line x1="409.00" y1="470.00" x2="409.00" y2="480.00" stroke="#c8c8c8" stroke-width="0.8" />
<line x1="447.50" y1="470.00" x2="447.50" y2="480.00" stroke="#c8c8c8" stroke-width="0.8" />
<line x1="481.00" y1="470.00" x2="481.00" y2="480.00" stroke="#c8c8c8" stroke-width="0.8" />
<line x1="505.00" y1="470.00" x2="505.00" y2="480.00" stroke="#c8c8c8" stroke-width="0.8" />
<line x1="528.50" y1="470.00" x2="528.50" y2="480.00" stroke="#c8c8c8" stroke-width="0.8" />
<line x1="551.00" y1="470.00" x2="551.00" y2="480.00" stroke="#c8c8c8" stroke-width="0.8" />
<line x1="574.00" y1="470.00" x2="574.00" y2="480.00" stroke="#c8c8c8" stroke-width="0.8" />
<line x1="596.50" y1="470.00" x2="596.50" y2="480.00" stroke="#c8c8c8" stroke-width="0.8" />
<text x="411" y="477" font-size="5.8" fill="#222" text-anchor="start" font-weight="normal" style="font-family:&quot;Liberation Sans&quot;" textLength="12" lengthAdjust="spacingAndGlyphs"  stroke="#222" stroke-width="0.15">Default</text>
<rect x="598.50" y="471.00" width="8.00" height="6.00" fill="#2d6a9a" />
<path d="M598.5,477 L606.5,471 L606.5,472.5 L599.5,477 Z" fill="#7ac070"/>
<text x="608" y="477" font-size="5.8" fill="#222" text-anchor="start" font-weight="normal" style="font-family:&quot;Liberation Sans&quot;" textLength="17" lengthAdjust="spacingAndGlyphs"  stroke="#222" stroke-width="0.15">5039/4 kb</text>
</svg></body></html>
